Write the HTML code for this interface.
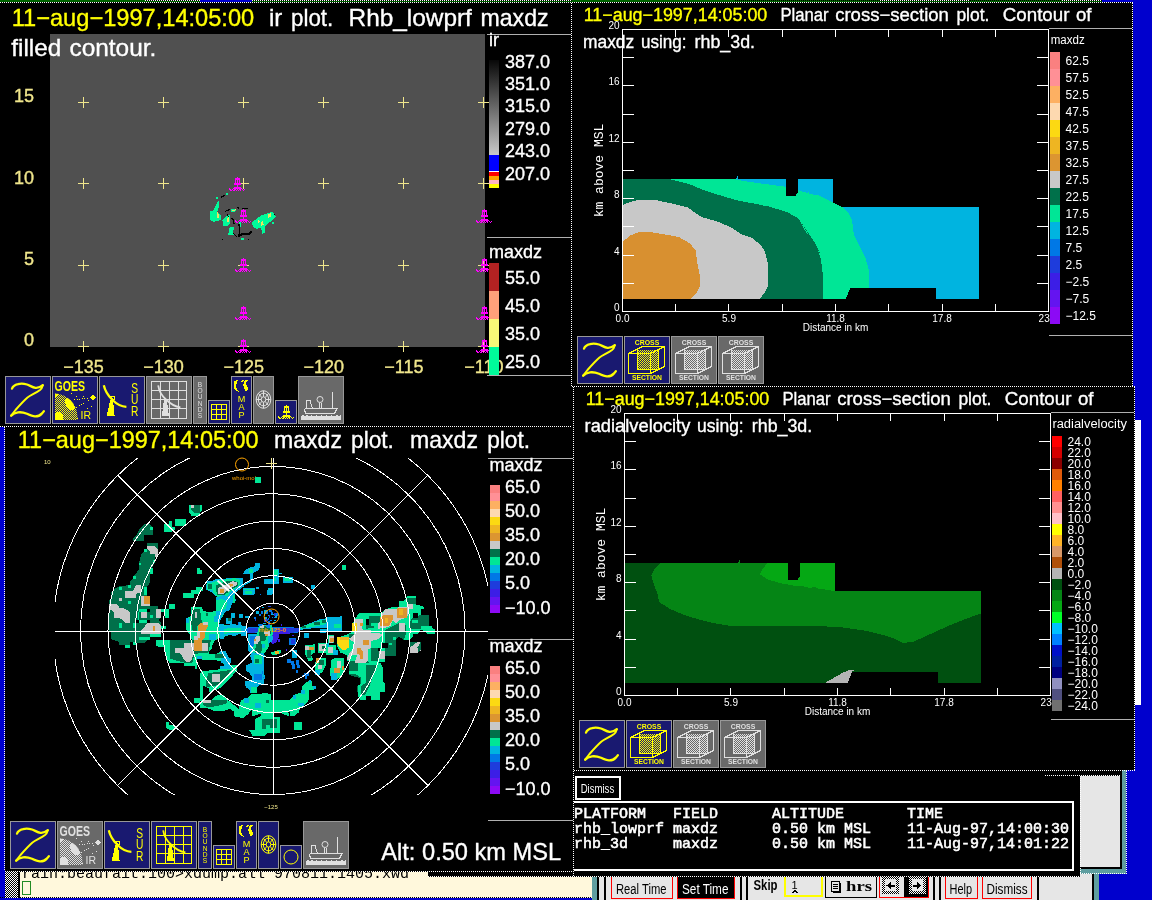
<!DOCTYPE html>
<html><head><meta charset="utf-8"><title>zebra display</title>
<style>
html,body{margin:0;padding:0;background:#000;}
body{width:1152px;height:900px;overflow:hidden;font-family:"Liberation Sans",sans-serif;}
svg{display:block;position:absolute;left:0;top:0;will-change:transform;}
svg text{white-space:pre;}
</style></head><body>
<svg width="1152" height="900" viewBox="0 0 1152 900" shape-rendering="crispEdges">
<defs>
<pattern id="dith_ffff00" width="2" height="2" patternUnits="userSpaceOnUse"><rect x="0" y="0" width="1" height="1" fill="#ffff00"/><rect x="1" y="1" width="1" height="1" fill="#ffff00"/></pattern><pattern id="dith_e0e0e0" width="2" height="2" patternUnits="userSpaceOnUse"><rect x="0" y="0" width="1" height="1" fill="#e0e0e0"/><rect x="1" y="1" width="1" height="1" fill="#e0e0e0"/></pattern><pattern id="dith_808080" width="2" height="2" patternUnits="userSpaceOnUse"><rect x="0" y="0" width="1" height="1" fill="#808080"/><rect x="1" y="1" width="1" height="1" fill="#808080"/></pattern><pattern id="dith_ffffff" width="2" height="2" patternUnits="userSpaceOnUse"><rect x="0" y="0" width="1" height="1" fill="#ffffff"/><rect x="1" y="1" width="1" height="1" fill="#ffffff"/></pattern><symbol id="buoy" width="16" height="14" viewBox="0 0 16 14" overflow="visible"><path d="M8 0h1v1h-1zM6 1h5v1h-5zM6 2h5v1h-5zM6 3h1v1h-1zM8 3h1v1h-1zM10 3h1v1h-1zM6 4h1v1h-1zM8 4h1v1h-1zM10 4h1v1h-1zM6 5h1v1h-1zM8 5h1v1h-1zM10 5h1v1h-1zM5 6h7v1h-7zM5 7h7v1h-7zM8 8h1v1h-1zM8 9h1v1h-1zM5 10h7v1h-7zM0 11h1v1h-1zM4 11h9v1h-9zM0 12h2v1h-2zM3 12h1v1h-1zM5 12h2v1h-2zM8 12h1v1h-1zM10 12h2v1h-2zM13 12h1v1h-1zM15 12h1v1h-1zM1 13h2v1h-2zM4 13h2v1h-2zM7 13h1v1h-1zM9 13h1v1h-1zM11 13h1v1h-1zM14 13h1v1h-1z" fill="currentColor"/></symbol><linearGradient id="irg" x1="0" y1="0" x2="0" y2="1"><stop offset="0" stop-color="#080808"/><stop offset="1" stop-color="#c8c8c8"/></linearGradient>
</defs>
<rect x="0" y="0" width="1152" height="900" fill="#000" />
<rect x="1133" y="0" width="19" height="900" fill="#0000cd" />
<rect x="1126" y="770" width="26" height="130" fill="#0000cd" />
<rect x="1099" y="874" width="53" height="26" fill="#0000cd" />
<rect x="0" y="427" width="5" height="473" fill="#0000cd" />
<rect x="0" y="897" width="600" height="3" fill="#0000cd" />
<rect x="0" y="0" width="1102" height="2" fill="#006400" />
<rect x="145" y="0" width="55" height="1" fill="#000" />
<line x1="145" y1="0.5" x2="200" y2="0.5" stroke="#fff" stroke-width="1" stroke-dasharray="1 1"/>
<rect x="252" y="0" width="320" height="1" fill="#000" />
<line x1="252" y1="0.5" x2="572" y2="0.5" stroke="#fff" stroke-width="1" stroke-dasharray="1 1"/>
<rect x="880" y="0" width="90" height="1" fill="#000" />
<line x1="880" y1="0.5" x2="970" y2="0.5" stroke="#fff" stroke-width="1" stroke-dasharray="1 1"/>
<rect x="1062" y="0" width="40" height="1" fill="#000" />
<line x1="1062" y1="0.5" x2="1102" y2="0.5" stroke="#fff" stroke-width="1" stroke-dasharray="1 1"/>
<line x1="735" y1="0.5" x2="880" y2="0.5" stroke="#000" stroke-width="1" stroke-dasharray="1 1"/>
<line x1="970" y1="0.5" x2="1062" y2="0.5" stroke="#000" stroke-width="1" stroke-dasharray="1 1"/>
<rect x="200" y="0" width="52" height="2" fill="#0000cd" />
<rect x="1102" y="0" width="50" height="2" fill="#0000cd" />
<line x1="0" y1="2.5" x2="1102" y2="2.5" stroke="#fff" stroke-width="1" stroke-dasharray="1 1"/>
<rect x="50" y="34" width="435" height="313" fill="#505050" />
<text x="11.7" y="26.3" font-size="24" fill="#ffff00" font-family='"Liberation Sans", sans-serif' text-anchor="start"  textLength="242.47" lengthAdjust="spacingAndGlyphs" stroke="#ffff00" stroke-width="0.35">11−aug−1997,14:05:00</text>
<text x="268.9" y="26.3" font-size="24" fill="#fff" font-family='"Liberation Sans", sans-serif' text-anchor="start"  stroke="#fff" stroke-width="0.35">ir</text>
<text x="291.1" y="26.3" font-size="24" fill="#fff" font-family='"Liberation Sans", sans-serif' text-anchor="start"  textLength="42.19" lengthAdjust="spacingAndGlyphs" stroke="#fff" stroke-width="0.35">plot.</text>
<text x="348.6" y="26.3" font-size="24" fill="#fff" font-family='"Liberation Sans", sans-serif' text-anchor="start"  textLength="123.29" lengthAdjust="spacingAndGlyphs" stroke="#fff" stroke-width="0.35">Rhb_lowprf</text>
<text x="480.5" y="26.3" font-size="24" fill="#fff" font-family='"Liberation Sans", sans-serif' text-anchor="start"  textLength="68.04" lengthAdjust="spacingAndGlyphs" stroke="#fff" stroke-width="0.35">maxdz</text>
<text x="11.3" y="56.3" font-size="24" fill="#fff" font-family='"Liberation Sans", sans-serif' text-anchor="start"  textLength="49.98" lengthAdjust="spacingAndGlyphs" stroke="#fff" stroke-width="0.35">filled</text>
<text x="69.5" y="56.3" font-size="24" fill="#fff" font-family='"Liberation Sans", sans-serif' text-anchor="start"  textLength="86.82" lengthAdjust="spacingAndGlyphs" stroke="#fff" stroke-width="0.35">contour.</text>
<text x="34" y="102.3" font-size="18" fill="#f0e68c" font-family='"Liberation Sans", sans-serif' text-anchor="end"  stroke="#f0e68c" stroke-width="0.35">15</text>
<text x="34" y="183.6" font-size="18" fill="#f0e68c" font-family='"Liberation Sans", sans-serif' text-anchor="end"  stroke="#f0e68c" stroke-width="0.35">10</text>
<text x="34" y="264.9" font-size="18" fill="#f0e68c" font-family='"Liberation Sans", sans-serif' text-anchor="end"  stroke="#f0e68c" stroke-width="0.35">5</text>
<text x="34" y="346.2" font-size="18" fill="#f0e68c" font-family='"Liberation Sans", sans-serif' text-anchor="end"  stroke="#f0e68c" stroke-width="0.35">0</text>
<text x="83.5" y="372.9" font-size="18" fill="#f0e68c" font-family='"Liberation Sans", sans-serif' text-anchor="middle"  stroke="#f0e68c" stroke-width="0.35">−135</text>
<text x="163.58" y="372.9" font-size="18" fill="#f0e68c" font-family='"Liberation Sans", sans-serif' text-anchor="middle"  stroke="#f0e68c" stroke-width="0.35">−130</text>
<text x="243.66" y="372.9" font-size="18" fill="#f0e68c" font-family='"Liberation Sans", sans-serif' text-anchor="middle"  stroke="#f0e68c" stroke-width="0.35">−125</text>
<text x="323.74" y="372.9" font-size="18" fill="#f0e68c" font-family='"Liberation Sans", sans-serif' text-anchor="middle"  stroke="#f0e68c" stroke-width="0.35">−120</text>
<text x="403.82" y="372.9" font-size="18" fill="#f0e68c" font-family='"Liberation Sans", sans-serif' text-anchor="middle"  stroke="#f0e68c" stroke-width="0.35">−115</text>
<text x="483.9" y="372.9" font-size="18" fill="#f0e68c" font-family='"Liberation Sans", sans-serif' text-anchor="middle"  stroke="#f0e68c" stroke-width="0.35">−110</text>
<line x1="78" y1="102.5" x2="89" y2="102.5" stroke="#f0e68c" stroke-width="1" />
<line x1="83.5" y1="97" x2="83.5" y2="108" stroke="#f0e68c" stroke-width="1" />
<line x1="78" y1="183.5" x2="89" y2="183.5" stroke="#f0e68c" stroke-width="1" />
<line x1="83.5" y1="178" x2="83.5" y2="189" stroke="#f0e68c" stroke-width="1" />
<line x1="78" y1="265.5" x2="89" y2="265.5" stroke="#f0e68c" stroke-width="1" />
<line x1="83.5" y1="260" x2="83.5" y2="271" stroke="#f0e68c" stroke-width="1" />
<line x1="78" y1="346.5" x2="89" y2="346.5" stroke="#f0e68c" stroke-width="1" />
<line x1="83.5" y1="341" x2="83.5" y2="352" stroke="#f0e68c" stroke-width="1" />
<line x1="158" y1="102.5" x2="169" y2="102.5" stroke="#f0e68c" stroke-width="1" />
<line x1="163.5" y1="97" x2="163.5" y2="108" stroke="#f0e68c" stroke-width="1" />
<line x1="158" y1="183.5" x2="169" y2="183.5" stroke="#f0e68c" stroke-width="1" />
<line x1="163.5" y1="178" x2="163.5" y2="189" stroke="#f0e68c" stroke-width="1" />
<line x1="158" y1="265.5" x2="169" y2="265.5" stroke="#f0e68c" stroke-width="1" />
<line x1="163.5" y1="260" x2="163.5" y2="271" stroke="#f0e68c" stroke-width="1" />
<line x1="158" y1="346.5" x2="169" y2="346.5" stroke="#f0e68c" stroke-width="1" />
<line x1="163.5" y1="341" x2="163.5" y2="352" stroke="#f0e68c" stroke-width="1" />
<line x1="238" y1="102.5" x2="249" y2="102.5" stroke="#f0e68c" stroke-width="1" />
<line x1="243.5" y1="97" x2="243.5" y2="108" stroke="#f0e68c" stroke-width="1" />
<line x1="238" y1="183.5" x2="249" y2="183.5" stroke="#f0e68c" stroke-width="1" />
<line x1="243.5" y1="178" x2="243.5" y2="189" stroke="#f0e68c" stroke-width="1" />
<line x1="238" y1="265.5" x2="249" y2="265.5" stroke="#f0e68c" stroke-width="1" />
<line x1="243.5" y1="260" x2="243.5" y2="271" stroke="#f0e68c" stroke-width="1" />
<line x1="238" y1="346.5" x2="249" y2="346.5" stroke="#f0e68c" stroke-width="1" />
<line x1="243.5" y1="341" x2="243.5" y2="352" stroke="#f0e68c" stroke-width="1" />
<line x1="318" y1="102.5" x2="329" y2="102.5" stroke="#f0e68c" stroke-width="1" />
<line x1="323.5" y1="97" x2="323.5" y2="108" stroke="#f0e68c" stroke-width="1" />
<line x1="318" y1="183.5" x2="329" y2="183.5" stroke="#f0e68c" stroke-width="1" />
<line x1="323.5" y1="178" x2="323.5" y2="189" stroke="#f0e68c" stroke-width="1" />
<line x1="318" y1="265.5" x2="329" y2="265.5" stroke="#f0e68c" stroke-width="1" />
<line x1="323.5" y1="260" x2="323.5" y2="271" stroke="#f0e68c" stroke-width="1" />
<line x1="318" y1="346.5" x2="329" y2="346.5" stroke="#f0e68c" stroke-width="1" />
<line x1="323.5" y1="341" x2="323.5" y2="352" stroke="#f0e68c" stroke-width="1" />
<line x1="398" y1="102.5" x2="409" y2="102.5" stroke="#f0e68c" stroke-width="1" />
<line x1="403.5" y1="97" x2="403.5" y2="108" stroke="#f0e68c" stroke-width="1" />
<line x1="398" y1="183.5" x2="409" y2="183.5" stroke="#f0e68c" stroke-width="1" />
<line x1="403.5" y1="178" x2="403.5" y2="189" stroke="#f0e68c" stroke-width="1" />
<line x1="398" y1="265.5" x2="409" y2="265.5" stroke="#f0e68c" stroke-width="1" />
<line x1="403.5" y1="260" x2="403.5" y2="271" stroke="#f0e68c" stroke-width="1" />
<line x1="398" y1="346.5" x2="409" y2="346.5" stroke="#f0e68c" stroke-width="1" />
<line x1="403.5" y1="341" x2="403.5" y2="352" stroke="#f0e68c" stroke-width="1" />
<line x1="478" y1="102.5" x2="489" y2="102.5" stroke="#f0e68c" stroke-width="1" />
<line x1="483.5" y1="97" x2="483.5" y2="108" stroke="#f0e68c" stroke-width="1" />
<line x1="478" y1="183.5" x2="489" y2="183.5" stroke="#f0e68c" stroke-width="1" />
<line x1="483.5" y1="178" x2="483.5" y2="189" stroke="#f0e68c" stroke-width="1" />
<line x1="478" y1="265.5" x2="489" y2="265.5" stroke="#f0e68c" stroke-width="1" />
<line x1="483.5" y1="260" x2="483.5" y2="271" stroke="#f0e68c" stroke-width="1" />
<line x1="478" y1="346.5" x2="489" y2="346.5" stroke="#f0e68c" stroke-width="1" />
<line x1="483.5" y1="341" x2="483.5" y2="352" stroke="#f0e68c" stroke-width="1" />
<use href="#buoy" x="229" y="177" color="#ff00ff"/>
<use href="#buoy" x="235" y="209" color="#ff00ff"/>
<use href="#buoy" x="235" y="258" color="#ff00ff"/>
<use href="#buoy" x="235" y="306" color="#ff00ff"/>
<use href="#buoy" x="235" y="339" color="#ff00ff"/>
<use href="#buoy" x="476" y="209" color="#ff00ff"/>
<use href="#buoy" x="476" y="258" color="#ff00ff"/>
<use href="#buoy" x="476" y="306" color="#ff00ff"/>
<use href="#buoy" x="476" y="339" color="#ff00ff"/>
<line x1="487" y1="34.5" x2="571" y2="34.5" stroke="#b0b0b0" stroke-width="1" />
<text x="489" y="46.4" font-size="18" fill="#fff" font-family='"Liberation Sans", sans-serif' text-anchor="start"  stroke="#fff" stroke-width="0.35">ir</text>
<rect x="489" y="60" width="10" height="94.5" fill="url(#irg)" />
<rect x="489" y="154.5" width="10" height="16.5" fill="#0000ff" />
<rect x="489" y="171" width="10" height="1" fill="#fff" />
<rect x="489" y="172" width="10" height="4" fill="#ff0000" />
<rect x="489" y="176" width="10" height="4" fill="#ffa500" />
<rect x="489" y="180" width="10" height="4" fill="#ffb6c1" />
<rect x="489" y="184" width="10" height="4" fill="#ffff00" />
<text x="505" y="67.6" font-size="18" fill="#fff" font-family='"Liberation Sans", sans-serif' text-anchor="start"  stroke="#fff" stroke-width="0.35">387.0</text>
<text x="505" y="90" font-size="18" fill="#fff" font-family='"Liberation Sans", sans-serif' text-anchor="start"  stroke="#fff" stroke-width="0.35">351.0</text>
<text x="505" y="112.4" font-size="18" fill="#fff" font-family='"Liberation Sans", sans-serif' text-anchor="start"  stroke="#fff" stroke-width="0.35">315.0</text>
<text x="505" y="134.8" font-size="18" fill="#fff" font-family='"Liberation Sans", sans-serif' text-anchor="start"  stroke="#fff" stroke-width="0.35">279.0</text>
<text x="505" y="157.2" font-size="18" fill="#fff" font-family='"Liberation Sans", sans-serif' text-anchor="start"  stroke="#fff" stroke-width="0.35">243.0</text>
<text x="505" y="179.6" font-size="18" fill="#fff" font-family='"Liberation Sans", sans-serif' text-anchor="start"  stroke="#fff" stroke-width="0.35">207.0</text>
<line x1="487" y1="237.5" x2="571" y2="237.5" stroke="#b0b0b0" stroke-width="1" />
<text x="489" y="257.5" font-size="18" fill="#fff" font-family='"Liberation Sans", sans-serif' text-anchor="start"  stroke="#fff" stroke-width="0.35">maxdz</text>
<rect x="489" y="263" width="10" height="28" fill="#b22222" />
<rect x="489" y="291" width="10" height="28" fill="#ffa07a" />
<rect x="489" y="319" width="10" height="28" fill="#f8f878" />
<rect x="489" y="347" width="10" height="28" fill="#00fa9a" />
<text x="505" y="284" font-size="18" fill="#fff" font-family='"Liberation Sans", sans-serif' text-anchor="start"  stroke="#fff" stroke-width="0.35">55.0</text>
<text x="505" y="312.1" font-size="18" fill="#fff" font-family='"Liberation Sans", sans-serif' text-anchor="start"  stroke="#fff" stroke-width="0.35">45.0</text>
<text x="505" y="340.2" font-size="18" fill="#fff" font-family='"Liberation Sans", sans-serif' text-anchor="start"  stroke="#fff" stroke-width="0.35">35.0</text>
<text x="505" y="368.3" font-size="18" fill="#fff" font-family='"Liberation Sans", sans-serif' text-anchor="start"  stroke="#fff" stroke-width="0.35">25.0</text>
<line x1="487" y1="375.5" x2="571" y2="375.5" stroke="#b0b0b0" stroke-width="1" />
<polygon points="217.778,201.111 219.111,201.111 219.111,206.667 217.222,212.222 220.556,215.556 221.111,220 213.889,221.667 210,220 210,211.667 213.889,210 216.111,204.444" fill="#00fa9a" />
<polygon points="215.556,197.222 217.778,197.222 217.778,199.444 215.556,199.444" fill="#00fa9a" />
<polygon points="226.111,192.778 228.333,192.778 228.333,195 226.111,195" fill="#00fa9a" />
<polygon points="222.222,220 227.778,215 230,215.556 230.556,222.222 227.778,226.111 223.333,225.556" fill="#00fa9a" />
<polygon points="228.889,227.778 234.444,226.667 232.778,232.222 234.444,235.556 228.333,235" fill="#00fa9a" />
<polygon points="230.556,208.889 236.667,208.889 234.444,212.222 231.111,211.667" fill="#00fa9a" />
<polygon points="252.222,222.222 261.111,215.556 272.778,211.667 276.111,216.667 267.778,223.889 264.444,226.667 265.556,232.222 262.222,233.889 261.111,227.778 256.667,228.889 252.778,226.667" fill="#00fa9a" />
<polygon points="240.556,237.778 244.444,237.778 243.889,240.556 241.111,240" fill="#00fa9a" />
<polygon points="238.889,222.222 241.111,222.222 240.556,226.667 238.889,226.667" fill="#00fa9a" />
<polygon points="272.222,221.667 273.889,221.667 273.889,223.889 272.222,223.889" fill="#00fa9a" />
<polygon points="267.778,214.444 270.556,213.333 271.111,216.667 268.333,217.778" fill="#f0e060" />
<polygon points="261.111,221.667 263.333,221.111 263.556,225 261.333,225.556" fill="#f0e060" />
<polygon points="257.778,220.556 259.444,220 259.667,222.222 258,222.778" fill="#f0e060" />
<polygon points="227.222,217.778 228.889,217.222 229.111,221.667 227.556,222.222" fill="#f0e060" />
<polygon points="216.667,212.222 218.333,212.222 218.889,217.778 217.222,217.778" fill="#f0e060" />
<polygon points="232.222,209.778 235.556,209.444 235,211.111 232.444,211.333" fill="#f0e060" />
<polyline points="238.889,223.889 239.556,231.111 238.667,236.667" fill="none" stroke="#000" stroke-width="1.2"/>
<polyline points="237.778,236.667 242.222,234.222 249.444,234.222 251.778,231.111" fill="none" stroke="#000" stroke-width="2"/>
<polyline points="225,211.333 230,209.556" fill="none" stroke="#000" stroke-width="1.2"/>
<polyline points="220.556,197.556 224.667,195.556" fill="none" stroke="#000" stroke-width="1.2"/>
<polyline points="231.667,217.778 233.556,220.556 234,223.889" fill="none" stroke="#000" stroke-width="1.2"/>
<polyline points="232.778,232.778 236.667,236.667" fill="none" stroke="#000" stroke-width="1.2"/>
<polyline points="237.778,206.667 238.444,209.444" fill="none" stroke="#000" stroke-width="1.2"/>
<polyline points="242.222,208.556 247.778,208.556" fill="none" stroke="#000" stroke-width="1.2"/>
<polyline points="227.222,214.444 228.333,216.667" fill="none" stroke="#000" stroke-width="1.2"/>
<polygon points="221.778,239 222.667,239 222.667,239.889 221.778,239.889" fill="#000" />
<polygon points="247.889,239 248.778,239 248.778,239.889 247.889,239.889" fill="#000" />
<polygon points="274,214 274.889,214 274.889,214.889 274,214.889" fill="#000" />
<line x1="0" y1="426.5" x2="572" y2="426.5" stroke="#fff" stroke-width="1" stroke-dasharray="1 1"/>
<g transform="translate(5,376)"><rect x="0" y="0" width="46" height="48" fill="#989898"/><rect x="1" y="1" width="44" height="46" fill="#191970"/><g fill="none" stroke="#ffff00" stroke-linecap="round" stroke-linejoin="round" shape-rendering="geometricPrecision"><path d="M7 12.6 C7.8 10.5 10.5 8.8 13 8.2 C15 7.6 18 7.4 22 8.5 C25 9.6 27.5 11.4 30.5 11.8 C33.5 12 36 10.8 37.8 9.2" stroke-width="2.3"/><path d="M37.8 9.2 C37.2 11.5 36.5 12.8 35 14 C31 17 26 19 22.5 21.5 C18.5 25 14 30 10.5 34 L6.2 39.6" stroke-width="2"/><path d="M6.2 39.6 C8 37.8 10.5 36.8 13 36.4 C15 36.1 18.5 36.4 22 37.8 C25 39.2 27.5 40.3 30 40.4 C33 40.5 35.5 39 36.8 37.6 C37.8 36.6 38.4 36 38.9 35.2" stroke-width="2.3"/></g></g>
<g transform="translate(52,376)"><rect x="0" y="0" width="46" height="48" fill="#989898"/><rect x="1" y="1" width="44" height="46" fill="#191970"/><text x="2.6" y="15" font-size="15.5" font-weight="bold" font-family='"Liberation Sans", sans-serif' fill="#ffff00" textLength="30.5" lengthAdjust="spacingAndGlyphs">GOES</text><clipPath id="ec52_376"><circle cx="2" cy="41" r="23.5"/></clipPath><g clip-path="url(#ec52_376)"><rect x="3" y="17" width="23" height="27" fill="url(#dith_ffff00)"/><polygon points="13,25 16,21 19,21 21,25 23,31 22,34 18,34 14,31" fill="#ffff00"/><polygon points="3,44 3,38 5,36 9,36 11,39 11.5,44" fill="#ffff00"/><polygon points="3,17 8,17 6,20 3,21" fill="#ffff00"/></g><polygon points="40.5,18.5 43.5,21.5 40.5,24.5 37.5,21.5" fill="#ffff00"/><line x1="22" y1="23.5" x2="38" y2="22.5" stroke="#ffff00" stroke-width="1" stroke-dasharray="1 1.6"/><line x1="24.5" y1="31.5" x2="38.5" y2="23.5" stroke="#ffff00" stroke-width="1" stroke-dasharray="1 1.6"/><rect x="19" y="17" width="1" height="1" fill="#ffff00"/><rect x="24" y="20" width="1" height="1" fill="#ffff00"/><rect x="31" y="20" width="1" height="1" fill="#ffff00"/><rect x="39" y="30" width="1" height="1" fill="#ffff00"/><rect x="35" y="32" width="1" height="1" fill="#ffff00"/><rect x="25" y="42" width="1" height="1" fill="#ffff00"/><text x="28.5" y="42.6" font-size="10.2" font-family='"Liberation Sans", sans-serif' fill="#ffff00" textLength="10.5" lengthAdjust="spacingAndGlyphs">IR</text></g>
<g transform="translate(99,376)"><rect x="0" y="0" width="46" height="48" fill="#989898"/><rect x="1" y="1" width="44" height="46" fill="#191970"/><path d="M4.8 9.2 C6 15 9.5 20 13.5 24 C18 28.5 23 30.6 27.4 30.8" fill="none" stroke="#ffff00" stroke-width="2.3" shape-rendering="geometricPrecision"/><polygon points="11.3,20.8 15.5,20.8 15,24.2" fill="none" stroke="#ffff00" stroke-width="1"/><polygon points="11.2,23.5 13.4,23.5 14.7,30 15,35.2 15.6,39.6 8.2,39.6 8.6,35.2 9.9,30" fill="#ffff00"/><text transform="translate(35.6,16.6) scale(0.72,1)" font-size="14.2" font-weight="normal" font-family='"Liberation Sans", sans-serif' fill="#ffff00" text-anchor="middle">S</text><text transform="translate(35.6,28) scale(0.72,1)" font-size="14.2" font-weight="normal" font-family='"Liberation Sans", sans-serif' fill="#ffff00" text-anchor="middle">U</text><text transform="translate(35.6,39.6) scale(0.72,1)" font-size="14.2" font-weight="normal" font-family='"Liberation Sans", sans-serif' fill="#ffff00" text-anchor="middle">R</text></g>
<g transform="translate(146,376)"><rect x="0" y="0" width="46" height="48" fill="#989898"/><rect x="1" y="1" width="44" height="46" fill="#696969"/><line x1="5.5" y1="5" x2="5.5" y2="43" stroke="#e0e0e0" stroke-width="1"/><line x1="14.5" y1="5" x2="14.5" y2="43" stroke="#e0e0e0" stroke-width="1"/><line x1="23.5" y1="5" x2="23.5" y2="43" stroke="#e0e0e0" stroke-width="1"/><line x1="32.5" y1="5" x2="32.5" y2="43" stroke="#e0e0e0" stroke-width="1"/><line x1="40.5" y1="5" x2="40.5" y2="43" stroke="#e0e0e0" stroke-width="1"/><line x1="5" y1="5.5" x2="41" y2="5.5" stroke="#e0e0e0" stroke-width="1"/><line x1="5" y1="14.5" x2="41" y2="14.5" stroke="#e0e0e0" stroke-width="1"/><line x1="5" y1="23.5" x2="41" y2="23.5" stroke="#e0e0e0" stroke-width="1"/><line x1="5" y1="32.5" x2="41" y2="32.5" stroke="#e0e0e0" stroke-width="1"/><line x1="5" y1="42.5" x2="41" y2="42.5" stroke="#e0e0e0" stroke-width="1"/><path d="M12.2 9.4 C13 15 16 20 20 23.5 C24 27.5 29 30.6 34.4 31.4" fill="none" stroke="#e0e0e0" stroke-width="1.8" shape-rendering="geometricPrecision"/><polygon points="18.3,22.7 20.4,22.7 21.8,30.4 22.8,40 16,40 17,30.4" fill="#e0e0e0"/></g>
<g transform="translate(193,376)"><rect x="0" y="0" width="14" height="48" fill="#989898"/><rect x="1" y="1" width="12" height="46" fill="#696969"/><text transform="translate(7,11) scale(1,1)" font-size="6.6" font-weight="normal" font-family='"Liberation Sans", sans-serif' fill="#e0e0e0" text-anchor="middle">B</text><text transform="translate(7,17.2) scale(1,1)" font-size="6.6" font-weight="normal" font-family='"Liberation Sans", sans-serif' fill="#e0e0e0" text-anchor="middle">O</text><text transform="translate(7,23.4) scale(1,1)" font-size="6.6" font-weight="normal" font-family='"Liberation Sans", sans-serif' fill="#e0e0e0" text-anchor="middle">U</text><text transform="translate(7,29.6) scale(1,1)" font-size="6.6" font-weight="normal" font-family='"Liberation Sans", sans-serif' fill="#e0e0e0" text-anchor="middle">N</text><text transform="translate(7,35.8) scale(1,1)" font-size="6.6" font-weight="normal" font-family='"Liberation Sans", sans-serif' fill="#e0e0e0" text-anchor="middle">D</text><text transform="translate(7,42) scale(1,1)" font-size="6.6" font-weight="normal" font-family='"Liberation Sans", sans-serif' fill="#e0e0e0" text-anchor="middle">S</text></g>
<g transform="translate(208,400)"><rect x="0" y="0" width="22" height="24" fill="#989898"/><rect x="1" y="1" width="20" height="22" fill="#191970"/><line x1="3.5" y1="4" x2="3.5" y2="20" stroke="#ffff00" stroke-width="1"/><line x1="8.5" y1="4" x2="8.5" y2="20" stroke="#ffff00" stroke-width="1"/><line x1="13.5" y1="4" x2="13.5" y2="20" stroke="#ffff00" stroke-width="1"/><line x1="18.5" y1="4" x2="18.5" y2="20" stroke="#ffff00" stroke-width="1"/><line x1="3" y1="4.5" x2="19" y2="4.5" stroke="#ffff00" stroke-width="1"/><line x1="3" y1="9.5" x2="19" y2="9.5" stroke="#ffff00" stroke-width="1"/><line x1="3" y1="14.5" x2="19" y2="14.5" stroke="#ffff00" stroke-width="1"/><line x1="3" y1="19.5" x2="19" y2="19.5" stroke="#ffff00" stroke-width="1"/></g>
<g transform="translate(231,376)"><rect x="0" y="0" width="21" height="48" fill="#989898"/><rect x="1" y="1" width="19" height="46" fill="#191970"/><polygon points="3,5 7,4 6,7 4.5,10 6,13 8,16 5,15 3,13" fill="#ffff00"/><polygon points="9,5 13,4 11,7" fill="#ffff00"/><polygon points="14,4 18,3.5 15,7 16,10 17.5,13 15,16 13.5,13 12,9" fill="#ffff00"/><text transform="translate(10.5,25.5) scale(0.95,1)" font-size="9.6" font-weight="normal" font-family='"Liberation Sans", sans-serif' fill="#ffff00" text-anchor="middle">M</text><text transform="translate(10.5,33.8) scale(0.95,1)" font-size="9.6" font-weight="normal" font-family='"Liberation Sans", sans-serif' fill="#ffff00" text-anchor="middle">A</text><text transform="translate(10.5,42) scale(0.95,1)" font-size="9.6" font-weight="normal" font-family='"Liberation Sans", sans-serif' fill="#ffff00" text-anchor="middle">P</text></g>
<g transform="translate(253,376)"><rect x="0" y="0" width="21" height="48" fill="#989898"/><rect x="1" y="1" width="19" height="46" fill="#696969"/><g fill="none" stroke="#e0e0e0" stroke-width="1" shape-rendering="geometricPrecision"><ellipse cx="10.5" cy="23.5" rx="7.3" ry="8.8"/><ellipse cx="10.5" cy="23.5" rx="5.2" ry="6.4"/><ellipse cx="10.5" cy="23.5" rx="2.3" ry="2.7"/><line x1="12.80" y1="23.50" x2="17.80" y2="23.50"/><line x1="12.13" y1="25.41" x2="15.66" y2="29.72"/><line x1="10.50" y1="26.20" x2="10.50" y2="32.30"/><line x1="8.87" y1="25.41" x2="5.34" y2="29.72"/><line x1="8.20" y1="23.50" x2="3.20" y2="23.50"/><line x1="8.87" y1="21.59" x2="5.34" y2="17.28"/><line x1="10.50" y1="20.80" x2="10.50" y2="14.70"/><line x1="12.13" y1="21.59" x2="15.66" y2="17.28"/></g></g>
<g transform="translate(275,400)"><rect x="0" y="0" width="22" height="24" fill="#989898"/><rect x="1" y="1" width="20" height="22" fill="#191970"/><path d="M11 5h1v1h-1zM9 6h5v1h-5zM9 7h5v1h-5zM9 8h1v1h-1zM11 8h1v1h-1zM13 8h1v1h-1zM9 9h1v1h-1zM11 9h1v1h-1zM13 9h1v1h-1zM9 10h1v1h-1zM11 10h1v1h-1zM13 10h1v1h-1zM8 11h7v1h-7zM8 12h7v1h-7zM11 13h1v1h-1zM11 14h1v1h-1zM8 15h7v1h-7zM3 16h1v1h-1zM7 16h9v1h-9zM3 17h2v1h-2zM6 17h1v1h-1zM8 17h2v1h-2zM11 17h1v1h-1zM13 17h2v1h-2zM16 17h1v1h-1zM18 17h1v1h-1zM4 18h2v1h-2zM7 18h2v1h-2zM10 18h1v1h-1zM12 18h1v1h-1zM14 18h1v1h-1zM17 18h1v1h-1z" fill="#ffff00"/></g>
<g transform="translate(298,376)"><rect x="0" y="0" width="46" height="48" fill="#989898"/><rect x="1" y="1" width="44" height="46" fill="#696969"/><g fill="none" stroke="#e0e0e0" stroke-width="1"><polyline points="6.5,32.5 39,32.5 36.5,37.5 8,37.5 6.5,34.5 6.5,32.5"/><polyline points="8.5,32 8.5,24.5 12,24.5 14.2,32"/><circle cx="22" cy="23.5" r="3" shape-rendering="geometricPrecision"/><line x1="21.5" y1="26.5" x2="21.5" y2="32"/><line x1="23.5" y1="26.5" x2="23.5" y2="32"/><line x1="34.5" y1="16" x2="34.5" y2="32"/></g><path d="M3 44 V40 L5 38.5 L7 40.5 L9 39 L11 40.5 L13.5 39 L16 40.5 L18.5 39 L21 40.5 L23.5 39 L26 40.5 L28.5 39 L31 40.5 L33.5 39 L36 40.5 L38.5 39 L41 40 L43 38 V44 Z" fill="#e0e0e0"/></g>
<g transform="translate(0,0)">
<rect x="572" y="2" width="561" height="384" fill="#000" />
<text x="583.7" y="21" font-size="18" fill="#ffff00" font-family='"Liberation Sans", sans-serif' text-anchor="start"  textLength="183.59" lengthAdjust="spacingAndGlyphs" stroke="#ffff00" stroke-width="0.35">11−aug−1997,14:05:00</text>
<text x="780.5" y="21" font-size="18" fill="#fff" font-family='"Liberation Sans", sans-serif' text-anchor="start"  textLength="48.13" lengthAdjust="spacingAndGlyphs" stroke="#fff" stroke-width="0.35">Planar</text>
<text x="835.2" y="21" font-size="18" fill="#fff" font-family='"Liberation Sans", sans-serif' text-anchor="start"  textLength="113.66" lengthAdjust="spacingAndGlyphs" stroke="#fff" stroke-width="0.35">cross−section</text>
<text x="956.4" y="21" font-size="18" fill="#fff" font-family='"Liberation Sans", sans-serif' text-anchor="start"  textLength="33.03" lengthAdjust="spacingAndGlyphs" stroke="#fff" stroke-width="0.35">plot.</text>
<text x="1002.8" y="21" font-size="18" fill="#fff" font-family='"Liberation Sans", sans-serif' text-anchor="start"  textLength="66.64" lengthAdjust="spacingAndGlyphs" stroke="#fff" stroke-width="0.35">Contour</text>
<text x="1075.9" y="21" font-size="18" fill="#fff" font-family='"Liberation Sans", sans-serif' text-anchor="start"  textLength="15.58" lengthAdjust="spacingAndGlyphs" stroke="#fff" stroke-width="0.35">of</text>
<text x="583" y="47.8" font-size="18" fill="#fff" font-family='"Liberation Sans", sans-serif' text-anchor="start"  textLength="51.22" lengthAdjust="spacingAndGlyphs" stroke="#fff" stroke-width="0.35">maxdz</text>
<text x="641" y="47.8" font-size="18" fill="#fff" font-family='"Liberation Sans", sans-serif' text-anchor="start"  textLength="45.54" lengthAdjust="spacingAndGlyphs" stroke="#fff" stroke-width="0.35">using:</text>
<text x="694.6" y="47.8" font-size="18" fill="#fff" font-family='"Liberation Sans", sans-serif' text-anchor="start"  textLength="60.45" lengthAdjust="spacingAndGlyphs" stroke="#fff" stroke-width="0.35">rhb_3d.</text>
<polygon points="623,179 736.2,179 737.7,175 738.2,179 785.8,179 785.8,195.9 795.5,195.9 798,192 798,179 833,179 833,206.7 979,206.7 979,298.7 936,298.7 936,288 850.3,288 846,298.7 623,298.7" fill="#00b4e0" />
<polygon points="734.583,178.889 741.528,180.625 758.889,183.229 776.25,185.486 785.799,186.701 785.8,195.9 795.5,195.9 798,192 797.951,190.174 809.236,193.646 820,195.903 800,190.174 810.417,192.778 822.569,197.118 832.986,202.326 841.667,206.667 848.611,213.611 852.083,220.556 853.819,234.444 859.028,244.861 865.104,257.014 868.576,269.167 869.097,286.528 869,288 850.3,288 846,298.7 623,298.7 623,179" fill="#00e696" />
<polygon points="668.611,178.889 689.444,184.097 701.597,189.306 717.222,194.514 734.583,199.722 751.944,203.194 769.306,206.667 786.667,211.875 798.819,218.819 805.764,229.236 816.181,244.861 820,253.542 800,220.556 805.208,230.972 812.153,239.653 817.361,248.333 820.833,258.75 822.569,272.639 823.09,286.528 822.569,298.681 623,298.7 623,179" fill="#00704a" />
<polygon points="623.125,204.931 630.417,201.806 637.361,200.243 656.458,200.243 672.083,203.542 687.708,207.535 701.597,217.083 717.222,221.424 731.111,227.5 741.528,234.444 751.944,237.917 760.625,244.861 764.965,251.806 767.569,262.222 767.569,286.528 764.965,292.604 759.757,298.681 623.125,298.681" fill="#c8c8c8" />
<polygon points="623.125,241.389 630.417,235.312 639.097,232.188 651.25,232.188 665.139,234.444 679.028,237.049 689.444,243.125 695.521,250.069 697.257,262.222 699.861,276.111 699.861,286.528 696.389,293.472 691.181,298.681 623.125,298.681" fill="#d89030" />
<rect x="622.5" y="29.5" width="426.0" height="282.0" fill="none" stroke="#fff" stroke-width="1"/>
<line x1="622.5" y1="57.5" x2="634" y2="57.5" stroke="#fff" stroke-width="1" />
<line x1="1037" y1="57.5" x2="1048.5" y2="57.5" stroke="#fff" stroke-width="1" />
<line x1="622.5" y1="85.5" x2="634" y2="85.5" stroke="#fff" stroke-width="1" />
<line x1="1037" y1="85.5" x2="1048.5" y2="85.5" stroke="#fff" stroke-width="1" />
<line x1="622.5" y1="114.5" x2="634" y2="114.5" stroke="#fff" stroke-width="1" />
<line x1="1037" y1="114.5" x2="1048.5" y2="114.5" stroke="#fff" stroke-width="1" />
<line x1="622.5" y1="142.5" x2="634" y2="142.5" stroke="#fff" stroke-width="1" />
<line x1="1037" y1="142.5" x2="1048.5" y2="142.5" stroke="#fff" stroke-width="1" />
<line x1="622.5" y1="170.5" x2="634" y2="170.5" stroke="#fff" stroke-width="1" />
<line x1="1037" y1="170.5" x2="1048.5" y2="170.5" stroke="#fff" stroke-width="1" />
<line x1="622.5" y1="198.5" x2="634" y2="198.5" stroke="#fff" stroke-width="1" />
<line x1="1037" y1="198.5" x2="1048.5" y2="198.5" stroke="#fff" stroke-width="1" />
<line x1="622.5" y1="226.5" x2="634" y2="226.5" stroke="#fff" stroke-width="1" />
<line x1="1037" y1="226.5" x2="1048.5" y2="226.5" stroke="#fff" stroke-width="1" />
<line x1="622.5" y1="255.5" x2="634" y2="255.5" stroke="#fff" stroke-width="1" />
<line x1="1037" y1="255.5" x2="1048.5" y2="255.5" stroke="#fff" stroke-width="1" />
<line x1="622.5" y1="283.5" x2="634" y2="283.5" stroke="#fff" stroke-width="1" />
<line x1="1037" y1="283.5" x2="1048.5" y2="283.5" stroke="#fff" stroke-width="1" />
<line x1="675.5" y1="29.5" x2="675.5" y2="37" stroke="#fff" stroke-width="1" />
<line x1="675.5" y1="304" x2="675.5" y2="311.5" stroke="#fff" stroke-width="1" />
<line x1="728.5" y1="29.5" x2="728.5" y2="37" stroke="#fff" stroke-width="1" />
<line x1="728.5" y1="304" x2="728.5" y2="311.5" stroke="#fff" stroke-width="1" />
<line x1="782.5" y1="29.5" x2="782.5" y2="37" stroke="#fff" stroke-width="1" />
<line x1="782.5" y1="304" x2="782.5" y2="311.5" stroke="#fff" stroke-width="1" />
<line x1="835.5" y1="29.5" x2="835.5" y2="37" stroke="#fff" stroke-width="1" />
<line x1="835.5" y1="304" x2="835.5" y2="311.5" stroke="#fff" stroke-width="1" />
<line x1="888.5" y1="29.5" x2="888.5" y2="37" stroke="#fff" stroke-width="1" />
<line x1="888.5" y1="304" x2="888.5" y2="311.5" stroke="#fff" stroke-width="1" />
<line x1="942.5" y1="29.5" x2="942.5" y2="37" stroke="#fff" stroke-width="1" />
<line x1="942.5" y1="304" x2="942.5" y2="311.5" stroke="#fff" stroke-width="1" />
<line x1="995.5" y1="29.5" x2="995.5" y2="37" stroke="#fff" stroke-width="1" />
<line x1="995.5" y1="304" x2="995.5" y2="311.5" stroke="#fff" stroke-width="1" />
<text x="619.5" y="29" font-size="10" fill="#fff" font-family='"Liberation Sans", sans-serif' text-anchor="end" >20</text>
<text x="619.5" y="85.4" font-size="10" fill="#fff" font-family='"Liberation Sans", sans-serif' text-anchor="end" >16</text>
<text x="619.5" y="141.8" font-size="10" fill="#fff" font-family='"Liberation Sans", sans-serif' text-anchor="end" >12</text>
<text x="619.5" y="198.2" font-size="10" fill="#fff" font-family='"Liberation Sans", sans-serif' text-anchor="end" >8</text>
<text x="619.5" y="254.6" font-size="10" fill="#fff" font-family='"Liberation Sans", sans-serif' text-anchor="end" >4</text>
<text x="619.5" y="311" font-size="10" fill="#fff" font-family='"Liberation Sans", sans-serif' text-anchor="end" >0</text>
<text x="622.5" y="322.2" font-size="10" fill="#fff" font-family='"Liberation Sans", sans-serif' text-anchor="middle" >0.0</text>
<text x="729" y="322.2" font-size="10" fill="#fff" font-family='"Liberation Sans", sans-serif' text-anchor="middle" >5.9</text>
<text x="835.5" y="322.2" font-size="10" fill="#fff" font-family='"Liberation Sans", sans-serif' text-anchor="middle" >11.8</text>
<text x="942" y="322.2" font-size="10" fill="#fff" font-family='"Liberation Sans", sans-serif' text-anchor="middle" >17.8</text>
<text x="1038.6" y="322.2" font-size="10" fill="#fff" font-family='"Liberation Sans", sans-serif' text-anchor="start" >23</text>
<text x="835.5" y="331" font-size="10" fill="#fff" font-family='"Liberation Sans", sans-serif' text-anchor="middle" >Distance in km</text>
<text transform="translate(603,170.5) rotate(-90)" font-size="13" font-family='"Liberation Mono", monospace' fill="#fff" text-anchor="middle">km above MSL</text>
<line x1="1049" y1="28.5" x2="1132" y2="28.5" stroke="#b0b0b0" stroke-width="1" />
<line x1="1049" y1="335.5" x2="1132" y2="335.5" stroke="#b0b0b0" stroke-width="1" />
<text x="1050.7" y="43.6" font-size="12" fill="#fff" font-family='"Liberation Sans", sans-serif' text-anchor="start"  textLength="33.97" lengthAdjust="spacingAndGlyphs">maxdz</text>
<rect x="1050" y="52" width="10" height="17" fill="#fa8080" />
<text x="1065.5" y="65" font-size="12" fill="#fff" font-family='"Liberation Sans", sans-serif' text-anchor="start" >62.5</text>
<rect x="1050" y="69" width="10" height="17" fill="#ff9096" />
<text x="1065.5" y="82" font-size="12" fill="#fff" font-family='"Liberation Sans", sans-serif' text-anchor="start" >57.5</text>
<rect x="1050" y="86" width="10" height="17" fill="#fdb062" />
<text x="1065.5" y="99" font-size="12" fill="#fff" font-family='"Liberation Sans", sans-serif' text-anchor="start" >52.5</text>
<rect x="1050" y="103" width="10" height="17" fill="#fdd9b0" />
<text x="1065.5" y="116" font-size="12" fill="#fff" font-family='"Liberation Sans", sans-serif' text-anchor="start" >47.5</text>
<rect x="1050" y="120" width="10" height="17" fill="#fcd912" />
<text x="1065.5" y="133" font-size="12" fill="#fff" font-family='"Liberation Sans", sans-serif' text-anchor="start" >42.5</text>
<rect x="1050" y="137" width="10" height="17" fill="#eeb522" />
<text x="1065.5" y="150" font-size="12" fill="#fff" font-family='"Liberation Sans", sans-serif' text-anchor="start" >37.5</text>
<rect x="1050" y="154" width="10" height="17" fill="#dc9531" />
<text x="1065.5" y="167" font-size="12" fill="#fff" font-family='"Liberation Sans", sans-serif' text-anchor="start" >32.5</text>
<rect x="1050" y="171" width="10" height="17" fill="#c8c8c8" />
<text x="1065.5" y="184" font-size="12" fill="#fff" font-family='"Liberation Sans", sans-serif' text-anchor="start" >27.5</text>
<rect x="1050" y="188" width="10" height="17" fill="#00704a" />
<text x="1065.5" y="201" font-size="12" fill="#fff" font-family='"Liberation Sans", sans-serif' text-anchor="start" >22.5</text>
<rect x="1050" y="205" width="10" height="17" fill="#00e696" />
<text x="1065.5" y="218" font-size="12" fill="#fff" font-family='"Liberation Sans", sans-serif' text-anchor="start" >17.5</text>
<rect x="1050" y="222" width="10" height="17" fill="#00b4e0" />
<text x="1065.5" y="235" font-size="12" fill="#fff" font-family='"Liberation Sans", sans-serif' text-anchor="start" >12.5</text>
<rect x="1050" y="239" width="10" height="17" fill="#0078e6" />
<text x="1065.5" y="252" font-size="12" fill="#fff" font-family='"Liberation Sans", sans-serif' text-anchor="start" >7.5</text>
<rect x="1050" y="256" width="10" height="17" fill="#1e3cdc" />
<text x="1065.5" y="269" font-size="12" fill="#fff" font-family='"Liberation Sans", sans-serif' text-anchor="start" >2.5</text>
<rect x="1050" y="273" width="10" height="17" fill="#3c1ee6" />
<text x="1065.5" y="286" font-size="12" fill="#fff" font-family='"Liberation Sans", sans-serif' text-anchor="start" >−2.5</text>
<rect x="1050" y="290" width="10" height="17" fill="#6414f0" />
<text x="1065.5" y="303" font-size="12" fill="#fff" font-family='"Liberation Sans", sans-serif' text-anchor="start" >−7.5</text>
<rect x="1050" y="307" width="10" height="17" fill="#8c0af5" />
<text x="1065.5" y="320" font-size="12" fill="#fff" font-family='"Liberation Sans", sans-serif' text-anchor="start" >−12.5</text>
<g transform="translate(577,336)"><rect x="0" y="0" width="46" height="48" fill="#989898"/><rect x="1" y="1" width="44" height="46" fill="#191970"/><g fill="none" stroke="#ffff00" stroke-linecap="round" stroke-linejoin="round" shape-rendering="geometricPrecision"><path d="M7 12.6 C7.8 10.5 10.5 8.8 13 8.2 C15 7.6 18 7.4 22 8.5 C25 9.6 27.5 11.4 30.5 11.8 C33.5 12 36 10.8 37.8 9.2" stroke-width="2.3"/><path d="M37.8 9.2 C37.2 11.5 36.5 12.8 35 14 C31 17 26 19 22.5 21.5 C18.5 25 14 30 10.5 34 L6.2 39.6" stroke-width="2"/><path d="M6.2 39.6 C8 37.8 10.5 36.8 13 36.4 C15 36.1 18.5 36.4 22 37.8 C25 39.2 27.5 40.3 30 40.4 C33 40.5 35.5 39 36.8 37.6 C37.8 36.6 38.4 36 38.9 35.2" stroke-width="2.3"/></g></g>
<g transform="translate(624,336)"><rect x="0" y="0" width="46" height="48" fill="#989898"/><rect x="1" y="1" width="44" height="46" fill="#191970"/><text x="23" y="9" font-size="6.8" font-weight="bold" font-family='"Liberation Sans", sans-serif' fill="#ffff00" text-anchor="middle" textLength="24.5" lengthAdjust="spacingAndGlyphs">CROSS</text><text x="23" y="44" font-size="6.8" font-weight="bold" font-family='"Liberation Sans", sans-serif' fill="#ffff00" text-anchor="middle" textLength="30" lengthAdjust="spacingAndGlyphs">SECTION</text><polygon points="13,13.5 34,13.5 34,33.5 13,33.5" fill="url(#dith_ffff00)"/><g fill="none" stroke="#ffff00" stroke-width="1"><rect x="4.5" y="17.5" width="22" height="20"/><polyline points="4.5,17.5 18.5,10.5 40.5,10.5 40.5,30.5 26.5,37.5"/><line x1="26.5" y1="17.5" x2="40.5" y2="10.5"/><line x1="13.5" y1="13" x2="13.5" y2="33.5"/><line x1="34.5" y1="13.5" x2="34.5" y2="33.5"/><line x1="13" y1="33.5" x2="34" y2="33.5"/></g></g>
<g transform="translate(671,336)"><rect x="0" y="0" width="46" height="48" fill="#989898"/><rect x="1" y="1" width="44" height="46" fill="#696969"/><text x="23" y="9" font-size="6.8" font-weight="bold" font-family='"Liberation Sans", sans-serif' fill="#e0e0e0" text-anchor="middle" textLength="24.5" lengthAdjust="spacingAndGlyphs">CROSS</text><text x="23" y="44" font-size="6.8" font-weight="bold" font-family='"Liberation Sans", sans-serif' fill="#e0e0e0" text-anchor="middle" textLength="30" lengthAdjust="spacingAndGlyphs">SECTION</text><polygon points="13,13.5 34,13.5 34,33.5 13,33.5" fill="url(#dith_e0e0e0)"/><g fill="none" stroke="#e0e0e0" stroke-width="1"><rect x="4.5" y="17.5" width="22" height="20"/><polyline points="4.5,17.5 18.5,10.5 40.5,10.5 40.5,30.5 26.5,37.5"/><line x1="26.5" y1="17.5" x2="40.5" y2="10.5"/><line x1="13.5" y1="13" x2="13.5" y2="33.5"/><line x1="34.5" y1="13.5" x2="34.5" y2="33.5"/><line x1="13" y1="33.5" x2="34" y2="33.5"/></g></g>
<g transform="translate(718,336)"><rect x="0" y="0" width="46" height="48" fill="#989898"/><rect x="1" y="1" width="44" height="46" fill="#696969"/><text x="23" y="9" font-size="6.8" font-weight="bold" font-family='"Liberation Sans", sans-serif' fill="#e0e0e0" text-anchor="middle" textLength="24.5" lengthAdjust="spacingAndGlyphs">CROSS</text><text x="23" y="44" font-size="6.8" font-weight="bold" font-family='"Liberation Sans", sans-serif' fill="#e0e0e0" text-anchor="middle" textLength="30" lengthAdjust="spacingAndGlyphs">SECTION</text><polygon points="13,13.5 34,13.5 34,33.5 13,33.5" fill="url(#dith_e0e0e0)"/><g fill="none" stroke="#e0e0e0" stroke-width="1"><rect x="4.5" y="17.5" width="22" height="20"/><polyline points="4.5,17.5 18.5,10.5 40.5,10.5 40.5,30.5 26.5,37.5"/><line x1="26.5" y1="17.5" x2="40.5" y2="10.5"/><line x1="13.5" y1="13" x2="13.5" y2="33.5"/><line x1="34.5" y1="13.5" x2="34.5" y2="33.5"/><line x1="13" y1="33.5" x2="34" y2="33.5"/></g></g>
<line x1="571.5" y1="3" x2="571.5" y2="386" stroke="#fff" stroke-width="1" stroke-dasharray="1 1"/>
<line x1="572" y1="2.5" x2="1133" y2="2.5" stroke="#fff" stroke-width="1" stroke-dasharray="1 1"/>
<line x1="1132.5" y1="3" x2="1132.5" y2="386" stroke="#fff" stroke-width="1" stroke-dasharray="1 1"/>
<line x1="572" y1="386.5" x2="1133" y2="386.5" stroke="#fff" stroke-width="1" stroke-dasharray="1 1"/>
</g>
<g transform="translate(2,384)">
<rect x="572" y="2" width="561" height="384" fill="#000" />
<text x="583.7" y="21" font-size="18" fill="#ffff00" font-family='"Liberation Sans", sans-serif' text-anchor="start"  textLength="183.59" lengthAdjust="spacingAndGlyphs" stroke="#ffff00" stroke-width="0.35">11−aug−1997,14:05:00</text>
<text x="780.5" y="21" font-size="18" fill="#fff" font-family='"Liberation Sans", sans-serif' text-anchor="start"  textLength="48.13" lengthAdjust="spacingAndGlyphs" stroke="#fff" stroke-width="0.35">Planar</text>
<text x="835.2" y="21" font-size="18" fill="#fff" font-family='"Liberation Sans", sans-serif' text-anchor="start"  textLength="113.66" lengthAdjust="spacingAndGlyphs" stroke="#fff" stroke-width="0.35">cross−section</text>
<text x="956.4" y="21" font-size="18" fill="#fff" font-family='"Liberation Sans", sans-serif' text-anchor="start"  textLength="33.03" lengthAdjust="spacingAndGlyphs" stroke="#fff" stroke-width="0.35">plot.</text>
<text x="1002.8" y="21" font-size="18" fill="#fff" font-family='"Liberation Sans", sans-serif' text-anchor="start"  textLength="66.64" lengthAdjust="spacingAndGlyphs" stroke="#fff" stroke-width="0.35">Contour</text>
<text x="1075.9" y="21" font-size="18" fill="#fff" font-family='"Liberation Sans", sans-serif' text-anchor="start"  textLength="15.58" lengthAdjust="spacingAndGlyphs" stroke="#fff" stroke-width="0.35">of</text>
<text x="582.6" y="47.7" font-size="18" fill="#fff" font-family='"Liberation Sans", sans-serif' text-anchor="start"  textLength="105.76" lengthAdjust="spacingAndGlyphs" stroke="#fff" stroke-width="0.35">radialvelocity</text>
<text x="695.1" y="47.7" font-size="18" fill="#fff" font-family='"Liberation Sans", sans-serif' text-anchor="start"  textLength="46.64" lengthAdjust="spacingAndGlyphs" stroke="#fff" stroke-width="0.35">using:</text>
<text x="749.8" y="47.7" font-size="18" fill="#fff" font-family='"Liberation Sans", sans-serif' text-anchor="start"  textLength="60.45" lengthAdjust="spacingAndGlyphs" stroke="#fff" stroke-width="0.35">rhb_3d.</text>
<polygon points="623,179 736.2,179 737.7,175 738.2,179 786,179 786,195.9 795.5,195.9 798.2,192 798.2,179 833,179 833,207.1 979,207.1 979,298.8 936,298.8 936,287.5 850,287.5 845.7,298.8 623,298.8" fill="#005010" />
<polygon points="657.931,179.021 652.722,185.097 649.25,191.174 651.854,200.722 655.326,209.403 657.062,218.083 668.347,225.028 682.236,231.104 699.597,236.312 715.222,239.785 730.847,242.389 791.611,242.389 818,241.521 798,241.521 811.889,241.868 839.667,243.257 863.972,246.729 881.333,251.069 891.75,254.542 900.431,258.882 910.847,258.014 929.944,249.333 947.306,241.521 964.667,234.576 979.076,229.368 979,207.1 833,207.1 833,179 798.2,179 798.2,192 795.5,195.9 786,195.9 786,179 738.2,179 737.7,175 736.2,179" fill="#058515" />
<polygon points="765.569,179.021 760.361,185.097 757.757,190.306 765.569,195.514 777.722,198.986 791.611,201.59 818,203.847 798,202.979 811.889,203.847 824.042,205.583 833.069,207.146 833,179 798.2,179 798.2,192 795.5,195.9 786,195.9 786,179" fill="#05a814" />
<polygon points="823.174,298.812 841.403,288.396 848.347,285.792 854.424,287.007 850.083,287.528 845.743,298.812" fill="#b4b4b4" />
<rect x="622.5" y="29.5" width="426.0" height="282.0" fill="none" stroke="#fff" stroke-width="1"/>
<line x1="622.5" y1="57.5" x2="634" y2="57.5" stroke="#fff" stroke-width="1" />
<line x1="1037" y1="57.5" x2="1048.5" y2="57.5" stroke="#fff" stroke-width="1" />
<line x1="622.5" y1="85.5" x2="634" y2="85.5" stroke="#fff" stroke-width="1" />
<line x1="1037" y1="85.5" x2="1048.5" y2="85.5" stroke="#fff" stroke-width="1" />
<line x1="622.5" y1="114.5" x2="634" y2="114.5" stroke="#fff" stroke-width="1" />
<line x1="1037" y1="114.5" x2="1048.5" y2="114.5" stroke="#fff" stroke-width="1" />
<line x1="622.5" y1="142.5" x2="634" y2="142.5" stroke="#fff" stroke-width="1" />
<line x1="1037" y1="142.5" x2="1048.5" y2="142.5" stroke="#fff" stroke-width="1" />
<line x1="622.5" y1="170.5" x2="634" y2="170.5" stroke="#fff" stroke-width="1" />
<line x1="1037" y1="170.5" x2="1048.5" y2="170.5" stroke="#fff" stroke-width="1" />
<line x1="622.5" y1="198.5" x2="634" y2="198.5" stroke="#fff" stroke-width="1" />
<line x1="1037" y1="198.5" x2="1048.5" y2="198.5" stroke="#fff" stroke-width="1" />
<line x1="622.5" y1="226.5" x2="634" y2="226.5" stroke="#fff" stroke-width="1" />
<line x1="1037" y1="226.5" x2="1048.5" y2="226.5" stroke="#fff" stroke-width="1" />
<line x1="622.5" y1="255.5" x2="634" y2="255.5" stroke="#fff" stroke-width="1" />
<line x1="1037" y1="255.5" x2="1048.5" y2="255.5" stroke="#fff" stroke-width="1" />
<line x1="622.5" y1="283.5" x2="634" y2="283.5" stroke="#fff" stroke-width="1" />
<line x1="1037" y1="283.5" x2="1048.5" y2="283.5" stroke="#fff" stroke-width="1" />
<line x1="675.5" y1="29.5" x2="675.5" y2="37" stroke="#fff" stroke-width="1" />
<line x1="675.5" y1="304" x2="675.5" y2="311.5" stroke="#fff" stroke-width="1" />
<line x1="728.5" y1="29.5" x2="728.5" y2="37" stroke="#fff" stroke-width="1" />
<line x1="728.5" y1="304" x2="728.5" y2="311.5" stroke="#fff" stroke-width="1" />
<line x1="782.5" y1="29.5" x2="782.5" y2="37" stroke="#fff" stroke-width="1" />
<line x1="782.5" y1="304" x2="782.5" y2="311.5" stroke="#fff" stroke-width="1" />
<line x1="835.5" y1="29.5" x2="835.5" y2="37" stroke="#fff" stroke-width="1" />
<line x1="835.5" y1="304" x2="835.5" y2="311.5" stroke="#fff" stroke-width="1" />
<line x1="888.5" y1="29.5" x2="888.5" y2="37" stroke="#fff" stroke-width="1" />
<line x1="888.5" y1="304" x2="888.5" y2="311.5" stroke="#fff" stroke-width="1" />
<line x1="942.5" y1="29.5" x2="942.5" y2="37" stroke="#fff" stroke-width="1" />
<line x1="942.5" y1="304" x2="942.5" y2="311.5" stroke="#fff" stroke-width="1" />
<line x1="995.5" y1="29.5" x2="995.5" y2="37" stroke="#fff" stroke-width="1" />
<line x1="995.5" y1="304" x2="995.5" y2="311.5" stroke="#fff" stroke-width="1" />
<text x="619.5" y="29" font-size="10" fill="#fff" font-family='"Liberation Sans", sans-serif' text-anchor="end" >20</text>
<text x="619.5" y="85.4" font-size="10" fill="#fff" font-family='"Liberation Sans", sans-serif' text-anchor="end" >16</text>
<text x="619.5" y="141.8" font-size="10" fill="#fff" font-family='"Liberation Sans", sans-serif' text-anchor="end" >12</text>
<text x="619.5" y="198.2" font-size="10" fill="#fff" font-family='"Liberation Sans", sans-serif' text-anchor="end" >8</text>
<text x="619.5" y="254.6" font-size="10" fill="#fff" font-family='"Liberation Sans", sans-serif' text-anchor="end" >4</text>
<text x="619.5" y="311" font-size="10" fill="#fff" font-family='"Liberation Sans", sans-serif' text-anchor="end" >0</text>
<text x="622.5" y="322.2" font-size="10" fill="#fff" font-family='"Liberation Sans", sans-serif' text-anchor="middle" >0.0</text>
<text x="729" y="322.2" font-size="10" fill="#fff" font-family='"Liberation Sans", sans-serif' text-anchor="middle" >5.9</text>
<text x="835.5" y="322.2" font-size="10" fill="#fff" font-family='"Liberation Sans", sans-serif' text-anchor="middle" >11.8</text>
<text x="942" y="322.2" font-size="10" fill="#fff" font-family='"Liberation Sans", sans-serif' text-anchor="middle" >17.8</text>
<text x="1038.6" y="322.2" font-size="10" fill="#fff" font-family='"Liberation Sans", sans-serif' text-anchor="start" >23</text>
<text x="835.5" y="331" font-size="10" fill="#fff" font-family='"Liberation Sans", sans-serif' text-anchor="middle" >Distance in km</text>
<text transform="translate(603,170.5) rotate(-90)" font-size="13" font-family='"Liberation Mono", monospace' fill="#fff" text-anchor="middle">km above MSL</text>
<line x1="1049" y1="28.5" x2="1132" y2="28.5" stroke="#b0b0b0" stroke-width="1" />
<line x1="1049" y1="335.5" x2="1132" y2="335.5" stroke="#b0b0b0" stroke-width="1" />
<text x="1050.4" y="43.8" font-size="12" fill="#fff" font-family='"Liberation Sans", sans-serif' text-anchor="start"  textLength="74.59" lengthAdjust="spacingAndGlyphs">radialvelocity</text>
<rect x="1050" y="52.4" width="10" height="11" fill="#ff0000" />
<text x="1065.5" y="62.1" font-size="12" fill="#fff" font-family='"Liberation Sans", sans-serif' text-anchor="start" >24.0</text>
<rect x="1050" y="63.4" width="10" height="11" fill="#d40000" />
<text x="1065.5" y="73.1" font-size="12" fill="#fff" font-family='"Liberation Sans", sans-serif' text-anchor="start" >22.0</text>
<rect x="1050" y="74.4" width="10" height="11" fill="#8b0000" />
<text x="1065.5" y="84.1" font-size="12" fill="#fff" font-family='"Liberation Sans", sans-serif' text-anchor="start" >20.0</text>
<rect x="1050" y="85.4" width="10" height="11" fill="#e05a0a" />
<text x="1065.5" y="95.1" font-size="12" fill="#fff" font-family='"Liberation Sans", sans-serif' text-anchor="start" >18.0</text>
<rect x="1050" y="96.4" width="10" height="11" fill="#ff8000" />
<text x="1065.5" y="106.1" font-size="12" fill="#fff" font-family='"Liberation Sans", sans-serif' text-anchor="start" >16.0</text>
<rect x="1050" y="107.4" width="10" height="11" fill="#ff6060" />
<text x="1065.5" y="117.1" font-size="12" fill="#fff" font-family='"Liberation Sans", sans-serif' text-anchor="start" >14.0</text>
<rect x="1050" y="118.4" width="10" height="11" fill="#ff9090" />
<text x="1065.5" y="128.1" font-size="12" fill="#fff" font-family='"Liberation Sans", sans-serif' text-anchor="start" >12.0</text>
<rect x="1050" y="129.4" width="10" height="11" fill="#ffc0c8" />
<text x="1065.5" y="139.1" font-size="12" fill="#fff" font-family='"Liberation Sans", sans-serif' text-anchor="start" >10.0</text>
<rect x="1050" y="140.4" width="10" height="11" fill="#ffff00" />
<text x="1065.5" y="150.1" font-size="12" fill="#fff" font-family='"Liberation Sans", sans-serif' text-anchor="start" >8.0</text>
<rect x="1050" y="151.4" width="10" height="11" fill="#ffb428" />
<text x="1065.5" y="161.1" font-size="12" fill="#fff" font-family='"Liberation Sans", sans-serif' text-anchor="start" >6.0</text>
<rect x="1050" y="162.4" width="10" height="11" fill="#d89868" />
<text x="1065.5" y="172.1" font-size="12" fill="#fff" font-family='"Liberation Sans", sans-serif' text-anchor="start" >4.0</text>
<rect x="1050" y="173.4" width="10" height="11" fill="#b0500a" />
<text x="1065.5" y="183.1" font-size="12" fill="#fff" font-family='"Liberation Sans", sans-serif' text-anchor="start" >2.0</text>
<rect x="1050" y="184.4" width="10" height="11" fill="#b4b4b4" />
<text x="1065.5" y="194.1" font-size="12" fill="#fff" font-family='"Liberation Sans", sans-serif' text-anchor="start" >0.0</text>
<rect x="1050" y="195.4" width="10" height="11" fill="#005010" />
<text x="1065.5" y="205.1" font-size="12" fill="#fff" font-family='"Liberation Sans", sans-serif' text-anchor="start" >−2.0</text>
<rect x="1050" y="206.4" width="10" height="11" fill="#058515" />
<text x="1065.5" y="216.1" font-size="12" fill="#fff" font-family='"Liberation Sans", sans-serif' text-anchor="start" >−4.0</text>
<rect x="1050" y="217.4" width="10" height="11" fill="#05a814" />
<text x="1065.5" y="227.1" font-size="12" fill="#fff" font-family='"Liberation Sans", sans-serif' text-anchor="start" >−6.0</text>
<rect x="1050" y="228.4" width="10" height="11" fill="#00ff28" />
<text x="1065.5" y="238.1" font-size="12" fill="#fff" font-family='"Liberation Sans", sans-serif' text-anchor="start" >−8.0</text>
<rect x="1050" y="239.4" width="10" height="11" fill="#00c0ff" />
<text x="1065.5" y="249.1" font-size="12" fill="#fff" font-family='"Liberation Sans", sans-serif' text-anchor="start" >−10.0</text>
<rect x="1050" y="250.4" width="10" height="11" fill="#0080ff" />
<text x="1065.5" y="260.1" font-size="12" fill="#fff" font-family='"Liberation Sans", sans-serif' text-anchor="start" >−12.0</text>
<rect x="1050" y="261.4" width="10" height="11" fill="#0010c8" />
<text x="1065.5" y="271.1" font-size="12" fill="#fff" font-family='"Liberation Sans", sans-serif' text-anchor="start" >−14.0</text>
<rect x="1050" y="272.4" width="10" height="11" fill="#0020a0" />
<text x="1065.5" y="282.1" font-size="12" fill="#fff" font-family='"Liberation Sans", sans-serif' text-anchor="start" >−16.0</text>
<rect x="1050" y="283.4" width="10" height="11" fill="#000080" />
<text x="1065.5" y="293.1" font-size="12" fill="#fff" font-family='"Liberation Sans", sans-serif' text-anchor="start" >−18.0</text>
<rect x="1050" y="294.4" width="10" height="11" fill="#9090c0" />
<text x="1065.5" y="304.1" font-size="12" fill="#fff" font-family='"Liberation Sans", sans-serif' text-anchor="start" >−20.0</text>
<rect x="1050" y="305.4" width="10" height="11" fill="#505080" />
<text x="1065.5" y="315.1" font-size="12" fill="#fff" font-family='"Liberation Sans", sans-serif' text-anchor="start" >−22.0</text>
<rect x="1050" y="316.4" width="10" height="11" fill="#707070" />
<text x="1065.5" y="326.1" font-size="12" fill="#fff" font-family='"Liberation Sans", sans-serif' text-anchor="start" >−24.0</text>
<g transform="translate(577,336)"><rect x="0" y="0" width="46" height="48" fill="#989898"/><rect x="1" y="1" width="44" height="46" fill="#191970"/><g fill="none" stroke="#ffff00" stroke-linecap="round" stroke-linejoin="round" shape-rendering="geometricPrecision"><path d="M7 12.6 C7.8 10.5 10.5 8.8 13 8.2 C15 7.6 18 7.4 22 8.5 C25 9.6 27.5 11.4 30.5 11.8 C33.5 12 36 10.8 37.8 9.2" stroke-width="2.3"/><path d="M37.8 9.2 C37.2 11.5 36.5 12.8 35 14 C31 17 26 19 22.5 21.5 C18.5 25 14 30 10.5 34 L6.2 39.6" stroke-width="2"/><path d="M6.2 39.6 C8 37.8 10.5 36.8 13 36.4 C15 36.1 18.5 36.4 22 37.8 C25 39.2 27.5 40.3 30 40.4 C33 40.5 35.5 39 36.8 37.6 C37.8 36.6 38.4 36 38.9 35.2" stroke-width="2.3"/></g></g>
<g transform="translate(624,336)"><rect x="0" y="0" width="46" height="48" fill="#989898"/><rect x="1" y="1" width="44" height="46" fill="#191970"/><text x="23" y="9" font-size="6.8" font-weight="bold" font-family='"Liberation Sans", sans-serif' fill="#ffff00" text-anchor="middle" textLength="24.5" lengthAdjust="spacingAndGlyphs">CROSS</text><text x="23" y="44" font-size="6.8" font-weight="bold" font-family='"Liberation Sans", sans-serif' fill="#ffff00" text-anchor="middle" textLength="30" lengthAdjust="spacingAndGlyphs">SECTION</text><polygon points="13,13.5 34,13.5 34,33.5 13,33.5" fill="url(#dith_ffff00)"/><g fill="none" stroke="#ffff00" stroke-width="1"><rect x="4.5" y="17.5" width="22" height="20"/><polyline points="4.5,17.5 18.5,10.5 40.5,10.5 40.5,30.5 26.5,37.5"/><line x1="26.5" y1="17.5" x2="40.5" y2="10.5"/><line x1="13.5" y1="13" x2="13.5" y2="33.5"/><line x1="34.5" y1="13.5" x2="34.5" y2="33.5"/><line x1="13" y1="33.5" x2="34" y2="33.5"/></g></g>
<g transform="translate(671,336)"><rect x="0" y="0" width="46" height="48" fill="#989898"/><rect x="1" y="1" width="44" height="46" fill="#696969"/><text x="23" y="9" font-size="6.8" font-weight="bold" font-family='"Liberation Sans", sans-serif' fill="#e0e0e0" text-anchor="middle" textLength="24.5" lengthAdjust="spacingAndGlyphs">CROSS</text><text x="23" y="44" font-size="6.8" font-weight="bold" font-family='"Liberation Sans", sans-serif' fill="#e0e0e0" text-anchor="middle" textLength="30" lengthAdjust="spacingAndGlyphs">SECTION</text><polygon points="13,13.5 34,13.5 34,33.5 13,33.5" fill="url(#dith_e0e0e0)"/><g fill="none" stroke="#e0e0e0" stroke-width="1"><rect x="4.5" y="17.5" width="22" height="20"/><polyline points="4.5,17.5 18.5,10.5 40.5,10.5 40.5,30.5 26.5,37.5"/><line x1="26.5" y1="17.5" x2="40.5" y2="10.5"/><line x1="13.5" y1="13" x2="13.5" y2="33.5"/><line x1="34.5" y1="13.5" x2="34.5" y2="33.5"/><line x1="13" y1="33.5" x2="34" y2="33.5"/></g></g>
<g transform="translate(718,336)"><rect x="0" y="0" width="46" height="48" fill="#989898"/><rect x="1" y="1" width="44" height="46" fill="#696969"/><text x="23" y="9" font-size="6.8" font-weight="bold" font-family='"Liberation Sans", sans-serif' fill="#e0e0e0" text-anchor="middle" textLength="24.5" lengthAdjust="spacingAndGlyphs">CROSS</text><text x="23" y="44" font-size="6.8" font-weight="bold" font-family='"Liberation Sans", sans-serif' fill="#e0e0e0" text-anchor="middle" textLength="30" lengthAdjust="spacingAndGlyphs">SECTION</text><polygon points="13,13.5 34,13.5 34,33.5 13,33.5" fill="url(#dith_e0e0e0)"/><g fill="none" stroke="#e0e0e0" stroke-width="1"><rect x="4.5" y="17.5" width="22" height="20"/><polyline points="4.5,17.5 18.5,10.5 40.5,10.5 40.5,30.5 26.5,37.5"/><line x1="26.5" y1="17.5" x2="40.5" y2="10.5"/><line x1="13.5" y1="13" x2="13.5" y2="33.5"/><line x1="34.5" y1="13.5" x2="34.5" y2="33.5"/><line x1="13" y1="33.5" x2="34" y2="33.5"/></g></g>
<line x1="571.5" y1="3" x2="571.5" y2="386" stroke="#fff" stroke-width="1" stroke-dasharray="1 1"/>
<line x1="572" y1="2.5" x2="1133" y2="2.5" stroke="#fff" stroke-width="1" stroke-dasharray="1 1"/>
<line x1="1132.5" y1="3" x2="1132.5" y2="386" stroke="#fff" stroke-width="1" stroke-dasharray="1 1"/>
<line x1="572" y1="386.5" x2="1133" y2="386.5" stroke="#fff" stroke-width="1" stroke-dasharray="1 1"/>
</g>
<rect x="1135" y="420" width="6" height="285" fill="#fff" />
<rect x="5" y="427" width="569" height="445" fill="#000" />
<text x="17.8" y="448" font-size="24" fill="#ffff00" font-family='"Liberation Sans", sans-serif' text-anchor="start"  textLength="240.77" lengthAdjust="spacingAndGlyphs" stroke="#ffff00" stroke-width="0.35">11−aug−1997,14:05:00</text>
<text x="273.9" y="448" font-size="24" fill="#fff" font-family='"Liberation Sans", sans-serif' text-anchor="start"  textLength="68.04" lengthAdjust="spacingAndGlyphs" stroke="#fff" stroke-width="0.35">maxdz</text>
<text x="351.1" y="448" font-size="24" fill="#fff" font-family='"Liberation Sans", sans-serif' text-anchor="start"  textLength="42.79" lengthAdjust="spacingAndGlyphs" stroke="#fff" stroke-width="0.35">plot.</text>
<text x="410" y="448" font-size="24" fill="#fff" font-family='"Liberation Sans", sans-serif' text-anchor="start"  textLength="67.94" lengthAdjust="spacingAndGlyphs" stroke="#fff" stroke-width="0.35">maxdz</text>
<text x="487.2" y="448" font-size="24" fill="#fff" font-family='"Liberation Sans", sans-serif' text-anchor="start"  textLength="42.79" lengthAdjust="spacingAndGlyphs" stroke="#fff" stroke-width="0.35">plot.</text>
<clipPath id="rclip"><rect x="55" y="458" width="433" height="337"/></clipPath>
<g clip-path="url(#rclip)">
<polygon points="189,505 201.875,505 201.875,510 200,513.125 200,516 191.875,516 189,512.5" fill="#00e696" />
<polygon points="191,505.25 200,505.25 200,513.125 194.375,513.125 191,510" fill="#00704a" />
<polygon points="191,505.25 194,505.25 194,508.125 191,508.125" fill="#c8c8c8" />
<polygon points="175,519 186,519 186,523.75 182.5,526.25 175,526.25" fill="#00e696" />
<polygon points="164,524 169,524 169,521 172,521 172,526.875 175,526.875 175,529.75 172.25,529.75 172.25,531.875 164,531.875" fill="#00e696" />
<polygon points="144,524 150,524 153.125,527.25 153.125,535 144,535 144,541 133.125,541 133.125,538.125 136.25,535 139,530 141.25,526.875" fill="#00704a" />
<polygon points="150,527.25 153.125,527.25 153.125,530.25 150,530.25" fill="#00e696" />
<polygon points="147.25,543.125 157.75,543.125 157.75,556.25 155,557.5 155,562.5 151.875,567.5 150,573.75 150,582 133.125,582 133.125,576.25 136.25,573.75 139,568.75 139,562.5 141.25,554 144.375,551.25 147.25,549" fill="#00704a" />
<polygon points="147.25,546 155,546 157.75,549 157.75,556.25 155,557.5 155,554 150,554 150,551.25 147.25,549" fill="#c8c8c8" />
<polygon points="144.375,549 147.25,549 147.25,551.875 144.375,551.875" fill="#00e696" />
<polygon points="139,562.75 141.25,562.75 141.25,565.25 139,565.25" fill="#00e696" />
<polygon points="150,568.125 153.125,568.125 153.125,573.75 150,573.75" fill="#00e696" />
<polygon points="133.125,576.25 136.25,576.25 136.25,579.375 133.125,579.375" fill="#00e696" />
<polygon points="153.125,560 155,560 155,563.125 153.125,563.125" fill="#00e696" />
<polygon points="197.25,568.125 200,568.125 200,571 202.25,571 202.25,573.75 197.25,573.75" fill="#00e696" />
<polygon points="138.75,570 152.5,570 152.5,573.75 150,573.75 150,582.5 147.25,586.25 147.25,596.25 150,596.25 150,606.25 158.125,606.25 158.125,609.375 161.25,609.375 161.25,617.5 158.125,620 161.25,622.5 161.25,632.5 150,637.5 144.375,643.125 136.25,643.125 133.125,641.875 130,641.875 130,645 119.375,645 119.375,641.875 111.25,639.375 111.25,632.5 108.5,631.25 108.5,601.25 111.25,598.125 111.25,592.5 114,589.375 119.375,586.25 130,585 130,581.25 133.125,578.125 136.25,575 138.75,572.5" fill="#00704a" />
<polygon points="136.25,585 141.25,585 141.25,591.875 136.25,593.75 136.25,597.5 125,597.5 125,591.25 133.125,590.625" fill="#c8c8c8" />
<polygon points="108.5,603.75 116.25,603.75 119.375,607.5 125,608.75 130,611.875 130,622.5 125,622.5 121.875,618.75 114,617.5 114,611.875 108.5,608.75" fill="#c8c8c8" />
<polygon points="119.375,598.125 122.25,598.125 122.25,601 119.375,601" fill="#c8c8c8" />
<polygon points="141.25,596.25 150,596.25 150,606.25 141.25,606.25" fill="#c8c8c8" />
<polygon points="144,596.25 150,596.25 150,603.75 144,603.75" fill="#dc9531" />
<polygon points="141.25,611.875 147.25,611.875 147.25,617.5 141.25,617.5" fill="#c8c8c8" />
<polygon points="155.625,609.375 161.25,609.375 161.25,617.5 155.625,617.5" fill="#c8c8c8" />
<polygon points="147.25,623.125 158.125,623.125 161.25,626.25 161.25,633.75 141.25,633.75 141.25,630 144.375,626.875" fill="#c8c8c8" />
<polygon points="153.125,625.625 155,625.625 155,631 153.125,631" fill="#dc9531" />
<polygon points="150,570 152.5,570 152.5,573.75 150,573.75" fill="#00e696" />
<polygon points="133.125,575.625 136.25,575.625 136.25,578.75 133.125,578.75" fill="#00e696" />
<polygon points="128.125,585 130.625,585 130.625,587.5 128.125,587.5" fill="#00e696" />
<polygon points="119.375,586.875 122.25,586.875 122.25,589.75 119.375,589.75" fill="#00e696" />
<polygon points="128.125,601 130.625,601 130.625,603.75 128.125,603.75" fill="#00e696" />
<polygon points="144,586.875 147.25,586.875 147.25,595 144,595" fill="#00e696" />
<polygon points="138.75,609.375 147.25,609.375 147.25,611.875 138.75,611.875" fill="#00e696" />
<polygon points="150,615 153.125,615 153.125,618.125 150,618.125" fill="#00e696" />
<polygon points="138.75,620 147.25,620 147.25,623.125 138.75,623.125" fill="#00e696" />
<polygon points="133.125,623.125 135,623.125 135,628.125 133.125,628.125" fill="#00e696" />
<polygon points="119.375,623.125 122.25,623.125 122.25,628.125 119.375,628.125" fill="#00e696" />
<polygon points="150,634.375 161.25,634.375 161.25,636.875 150,636.875" fill="#00e696" />
<polygon points="138.75,636.875 150,636.875 150,640 138.75,640" fill="#00e696" />
<polygon points="133.125,641.875 136.25,641.875 136.25,645 133.125,645" fill="#00e696" />
<polygon points="125,645 130,645 130,647.5 125,647.5" fill="#00e696" />
<polygon points="165,609.375 169,609.375 169,617.5 165,617.5" fill="#00e696" />
<polygon points="169,604.375 175,604.375 175,608.5 169,608.5" fill="#00e696" />
<polygon points="161.25,626.25 165.625,626.25 165.625,629.375 161.25,629.375" fill="#00e696" />
<polygon points="161.25,609.375 165,609.375 165,611.875 161.25,611.875" fill="#00e696" />
<polygon points="137.5,611.875 139,611.875 139,620 137.5,620" fill="#00e696" />
<polygon points="147.25,609 150,609 150,611.875 147.25,611.875" fill="#000" />
<polygon points="136.25,620 138.75,620 138.75,622.5 136.25,622.5" fill="#000" />
<polygon points="147.25,620 150,620 150,623.125 147.25,623.125" fill="#000" />
<polygon points="191,607 202,607 203,611 209,612 216,611 221,609 220,602 220,596 232,596 232,602 228,606 226,611 221,619 219,625 232,626 246,626 246,634 232,634 226,636 220,638 216,640 211,643 212,648 209,652 202,653 196,652 193,650 192,641 191,636 186,629 186,619 191,616" fill="#00e696" />
<polygon points="220,596 232,596 232,602 228,606 226,611 221,616 220,606" fill="#00b4e0" />
<polygon points="214,616 220,616 220,622 214,622" fill="#00b4e0" />
<polygon points="186,618 189,618 189,623 186,623" fill="#00b4e0" />
<polygon points="209,634 216,634 216,640 209,640" fill="#00b4e0" />
<polygon points="219,626 232,627 246,627 246,633 232,633 220,636" fill="#00b4e0" />
<polygon points="224,628 232,628 236,629 236,631 224,631" fill="#00e696" />
<polygon points="192,609 200,609 201,616 202,623 197,626 197,631 194,632 192,629 191,621" fill="#00704a" />
<polygon points="194.5,612 197,612 197,617.5 194.5,617.5" fill="#c8c8c8" />
<polygon points="203,640 210,640 211,648 207,652 201,652 201,650 208,650 208,643 203,643" fill="#00704a" />
<polygon points="197.5,626 201,623 207,623 208,626 205,632 205,638 201,641 200,650 194,650 194,641 197,638 197.5,632" fill="#dc9531" />
<polygon points="203,622 208,622 208,625 203,625" fill="#c8c8c8" />
<polygon points="197,631 200,631 200,638 197,638" fill="#c8c8c8" />
<polygon points="201,643 208,643 208,650 201,650" fill="#c8c8c8" />
<polygon points="194,636 197.5,636 197.5,641 194,641" fill="#c8c8c8" />
<polygon points="206,613 208,613 208,616 206,616" fill="#00704a" />
<polygon points="228,618 231,618 231,620.5 228,620.5" fill="#00704a" />
<polygon points="231,613 235,613 235,617.5 231,617.5" fill="#00b4e0" />
<polygon points="238,622 241,622 241,627 238,627" fill="#0078e6" />
<polygon points="240,616 242,616 242,617.5 240,617.5" fill="#0078e6" />
<polygon points="246,616 248,616 248,617.5 246,617.5" fill="#0078e6" />
<polygon points="242,614 243,614 243,616 242,616" fill="#0078e6" />
<polygon points="241,633 245,633 245,635.5 241,635.5" fill="#0078e6" />
<polygon points="232,634 236,634 236,635.5 232,635.5" fill="#00b4e0" />
<polygon points="196,654 203,655 214,655 220,652 226,652 230,660 230,666 224,665 220,661 214,660 204,660 196,658" fill="#00e696" />
<polygon points="220,652 226,652 230,660 230,666 224,665 223,660" fill="#00b4e0" />
<polygon points="203,656 206,656 206,660 203,660" fill="#00b4e0" />
<polygon points="197,656 202,656 202,658.5 197,658.5" fill="#00b4e0" />
<polygon points="215,655 222,655 222,657.5 215,657.5" fill="#00704a" />
<polygon points="220,666 232,666 232,670 220,670" fill="#00b4e0" />
<polygon points="201,671 235,669 232,676 224,684 218,686 201,686 200,676" fill="#00e696" />
<polygon points="208,675 232,670 224,681 218,685 209,683" fill="#00704a" />
<polygon points="212,674 220,674 220,682 212,682" fill="#c8c8c8" />
<polygon points="183.125,593.125 191.25,593.125 191.25,590 196.875,590 196.875,586.875 201.875,586.875 201.875,590.625 198.75,593.75 193.75,593.75 193.75,596.875 183.125,596.875" fill="#00e696" />
<polygon points="197.5,570 201.875,570 201.875,573.75 197.5,573.75" fill="#00e696" />
<polygon points="206.25,583.75 212.5,581.875 216.25,578.75 225,580 231.25,578.75 238.75,580 242.5,581.25 244,586.25 237.5,591.25 232.5,595 236.25,600 232.5,602.5 222.5,601.25 220,598.75 216.25,595 212.5,591.25 206.25,590" fill="#00b4e0" />
<polygon points="215,585 225,582.5 232.5,581.25 238.75,581.875 238.75,586.25 232.5,591.25 228.75,595 220,595 215.625,591.25" fill="#00e696" />
<polygon points="217.5,587.5 225,585 231.25,582.5 237.5,582.5 237.5,585.625 231.25,589.375 226.25,593.125 218.75,593.75" fill="#c8c8c8" />
<polygon points="220.25,587.5 223.75,587.5 223.75,593.125 220.25,593.125" fill="#dc9531" />
<polygon points="230,584 234.375,583.5 232.5,585.625 230,586.875" fill="#dc9531" />
<polygon points="207.5,583.75 212.5,583.75 212.5,588.75 207.5,588.75" fill="#00704a" />
<polygon points="183.125,593.125 191.25,593.125 191.25,590 196.25,590 196.25,586.875 202.5,586.875 202.5,590.625 198.75,590.625 198.75,593.75 193.75,593.75 193.75,597.5 183.125,597.5" fill="#00e696" />
<polygon points="196.875,568.125 200,568.125 200,570.625 202.25,570.625 202.25,573.75 196.875,573.75" fill="#00e696" />
<polygon points="206.875,581.25 217.5,580 227.5,578.125 235,577.5 242.5,578.125 243.125,583.75 250,580 250,573.75 243.125,573.75 245,570 250,567.5 255,566.25 254.375,562.5 260,563.125 259.375,570 253.125,573.125 253.125,578.75 250,582.5 242.5,586.25 235,590 235,602.5 230,602.5 230,597.5 225,600 225,606.25 220.625,606.25 220.625,599.375 216.25,596.25 211.875,592.5 206.875,590" fill="#00b4e0" />
<polygon points="212.5,582.5 217.5,580.625 226.25,579.375 235,578.125 240,580 240,585 235,588.75 230,592.5 227.5,596.25 217.5,597.5 212.5,592.5" fill="#00e696" />
<polygon points="206.875,582.5 212.5,582.5 212.5,590 206.875,590" fill="#00e696" />
<polygon points="208.125,583.75 211.875,583.75 211.875,588.75 208.125,588.75" fill="#00704a" />
<polygon points="249.375,569.375 253.125,569.375 253.125,573.125 249.375,573.125" fill="#00e696" />
<polygon points="216.25,585 226.25,581.25 235,580.625 238.125,582.5 238.125,585.625 232.5,588.75 227.5,592.5 223.75,595 217.5,595 216.25,591.25" fill="#00704a" />
<polygon points="217.5,588.125 221.25,586.875 227.5,583.75 232.5,581.25 236.875,581.875 236.875,585 231.25,588.125 226.25,591.25 223.75,593.75 218.125,593.75" fill="#c8c8c8" />
<polygon points="220,588.75 223.75,588.75 223.75,593.125 220,593.125" fill="#dc9531" />
<polygon points="229.375,583.75 233.75,583.75 232.5,585.625 230,587.5" fill="#dc9531" />
<line x1="217.5" y1="580.625" x2="229.375" y2="591.25" stroke="#fff" stroke-width="2" shape-rendering="geometricPrecision"/>
<polygon points="243.125,587.5 255,587.5 255,594.375 243.125,594.375" fill="#00b4e0" />
<polygon points="244.375,588.5 253.75,588.5 253.75,593.5 244.375,593.5" fill="#00e696" />
<polygon points="246.25,590.625 251.25,590.625 251.25,591.875 246.25,591.875" fill="#00704a" />
<polygon points="267.5,587.5 272.5,587.5 272.5,594.375 267.5,594.375" fill="#00b4e0" />
<polygon points="268.5,588.75 271.875,588.75 271.875,592.5 268.5,592.5" fill="#00e696" />
<polygon points="264.375,578.75 272.5,578.75 272.5,584.375 264.375,584.375" fill="#00b4e0" />
<polygon points="272.5,569.375 278.75,569.375 278.75,583.75 272.5,583.75" fill="#00b4e0" />
<polygon points="273.125,570 278.125,570 278.125,575.625 273.125,575.625" fill="#00e696" />
<polygon points="273.125,578.125 275.625,578.125 275.625,581.25 273.125,581.25" fill="#00e696" />
<polygon points="282.5,576.875 293.125,576.875 293.125,582.5 282.5,582.5" fill="#00b4e0" />
<polygon points="283.75,578.125 291.25,578.125 291.25,581.25 283.75,581.25" fill="#00e696" />
<polygon points="311.25,585 315,585 315,588.75 311.25,588.75" fill="#00b4e0" />
<polygon points="256.25,586.875 258.75,586.875 258.75,588.75 256.25,588.75" fill="#00b4e0" />
<polygon points="278.75,572.5 281.875,572.5 281.875,574.375 278.75,574.375" fill="#00b4e0" />
<polygon points="232.5,595 235,595 235,602.5 232.5,602.5" fill="#00e696" />
<polygon points="231.25,613.125 235,613.125 235,617.5 231.25,617.5" fill="#00b4e0" />
<polygon points="227.5,617.5 231.25,617.5 231.25,621.25 227.5,621.25" fill="#00704a" />
<polygon points="239.375,615 242.5,615 242.5,617.5 239.375,617.5" fill="#0078e6" />
<polygon points="238.75,622.5 241.25,622.5 241.25,626.25 238.75,626.25" fill="#00b4e0" />
<polygon points="219.75,627.5 232.25,623.75 246,626.25 246,633.75 232.25,635 219.75,636.25" fill="#00b4e0" />
<polygon points="223.5,628.75 241,627.5 241,632.5 223.5,633.75" fill="#00e696" />
<polygon points="246,627.6 260.4,626.8 276.4,627.2 298.8,627.6 298.8,632.4 286,633.6 276.4,632.96 246,632.96" fill="#0078e6" />
<polygon points="248.4,628 260.4,627.6 260.4,632.4 248.4,632.64" fill="#1e3cdc" />
<polygon points="276.4,627.6 294,628.4 297.2,630.4 294,632.8 284.4,634.4 276.4,633.2" fill="#3c1ee6" />
<polygon points="286,628.8 298.8,628 298.8,632 289.2,632.96" fill="#1e3cdc" />
<polygon points="271.6,631.2 279.6,631.2 278.8,637.6 275.6,643.2 271.6,644 270.8,637.6" fill="#3c1ee6" />
<polygon points="248.4,634.4 257.2,634.4 257.2,652 252.4,656.8 248.4,650.4" fill="#00b4e0" />
<polygon points="250,636 255.6,636 255.6,647.2 250,647.2" fill="#0078e6" />
<polygon points="259.6,624.8 271.6,624.8 273.2,634.4 270,639.2 268.4,647.2 265.2,652 262,656.8 254,656.8 252.4,652 254,644 256.4,636 258,629.6" fill="#00e696" />
<polygon points="260.4,626.4 270,626.4 270.8,633.6 266,637.6 264.4,644 261.2,652 257.2,655.2 254.8,652 256.4,644 258.8,636" fill="#00704a" />
<polygon points="264.4,631.2 270,631.2 270,636 266,636 264.4,634.4" fill="#c8c8c8" />
<polygon points="256,636 259.6,636 259.6,640.8 257.2,644 254.4,644 254.4,639.2" fill="#c8c8c8" />
<polygon points="260.4,624.8 264.4,624.8 264.4,628 260.4,628" fill="#c8c8c8" />
<polygon points="254,639.2 255.6,639.2 255.6,640.8 254,640.8" fill="#dc9531" />
<polygon points="265.2,634.4 267.6,634.4 267.6,636 265.2,636" fill="#dc9531" />
<polygon points="261.2,640.8 266.8,640.8 266,647.2 262,648.8" fill="#00e696" />
<polygon points="262,644 265.2,644 264.8,648 262.4,648" fill="#00b4e0" />
<polygon points="268.4,636 273.2,636 272.4,640.8 268.4,644" fill="#00b4e0" />
<polygon points="264,617 267,617 267,620 264,620" fill="#00b4e0" />
<polygon points="264,618 266,618 266,619 264,619" fill="#00b4e0" />
<polygon points="268,618 269,618 269,619 268,619" fill="#0078e6" />
<polygon points="271,612 273,612 273,615 271,615" fill="#0078e6" />
<polygon points="255,618 256,618 256,621 255,621" fill="#1e3cdc" />
<polygon points="254,617 256,617 256,619 254,619" fill="#0078e6" />
<polygon points="269,610 272,610 272,612 269,612" fill="#0078e6" />
<polygon points="276,613 278,613 278,616 276,616" fill="#0078e6" />
<polygon points="261,624 263,624 263,625 261,625" fill="#0078e6" />
<polygon points="264,619 266,619 266,622 264,622" fill="#1e3cdc" />
<polygon points="271,614 274,614 274,615 271,615" fill="#00b4e0" />
<polygon points="267,625 270,625 270,628 267,628" fill="#0078e6" />
<polygon points="261,611 263,611 263,614 261,614" fill="#0078e6" />
<polygon points="268,606 271,606 271,607 268,607" fill="#1e3cdc" />
<polygon points="275,615 277,615 277,618 275,618" fill="#00b4e0" />
<polygon points="274,617 275,617 275,618 274,618" fill="#0078e6" />
<polygon points="265,611 267,611 267,613 265,613" fill="#00b4e0" />
<polygon points="272,617 273,617 273,618 272,618" fill="#0078e6" />
<polygon points="267,611 268,611 268,612 267,612" fill="#0078e6" />
<polygon points="259,614 261,614 261,616 259,616" fill="#0078e6" />
<polygon points="266,625 269,625 269,627 266,627" fill="#0078e6" />
<polygon points="268,619 269,619 269,620 268,620" fill="#0078e6" />
<polygon points="264,613 265,613 265,616 264,616" fill="#0078e6" />
<polygon points="268,615 270,615 270,616 268,616" fill="#00b4e0" />
<polygon points="274,620 276,620 276,621 274,621" fill="#00b4e0" />
<polygon points="269,623 270,623 270,625 269,625" fill="#00b4e0" />
<polygon points="266,618 267,618 267,621 266,621" fill="#1e3cdc" />
<polygon points="256,611 259,611 259,614 256,614" fill="#00b4e0" />
<polygon points="269,615 270,615 270,618 269,618" fill="#1e3cdc" />
<polygon points="264,610 267,610 267,612 264,612" fill="#00b4e0" />
<polygon points="274,613 276,613 276,616 274,616" fill="#1e3cdc" />
<polygon points="263,623 265,623 265,624 263,624" fill="#0078e6" />
<polygon points="268,621 270,621 270,623 268,623" fill="#0078e6" />
<polygon points="258,624 261,624 261,626 258,626" fill="#0078e6" />
<polygon points="273,622 275,622 275,623 273,623" fill="#00b4e0" />
<polygon points="264,611 267,611 267,614 264,614" fill="#00b4e0" />
<polygon points="265,619 268,619 268,621 265,621" fill="#1e3cdc" />
<polygon points="266,612 268,612 268,614 266,614" fill="#0078e6" />
<polygon points="259,608 260,608 260,610 259,610" fill="#0078e6" />
<polygon points="262,607 264,607 264,608 262,608" fill="#00b4e0" />
<polygon points="270,620 272,620 272,621 270,621" fill="#0078e6" />
<polygon points="265,618 267,618 267,619 265,619" fill="#00b4e0" />
<polygon points="263,623 266,623 266,624 263,624" fill="#00b4e0" />
<polygon points="268,623 270,623 270,625 268,625" fill="#1e3cdc" />
<polygon points="261,625 262,625 262,626 261,626" fill="#0078e6" />
<polygon points="238.8,614.4 242.8,614.4 242.8,617.6 238.8,617.6" fill="#00b4e0" />
<polygon points="245.2,616 248.4,616 248.4,617.6 245.2,617.6" fill="#00b4e0" />
<polygon points="238.8,622.4 241.2,622.4 241.2,625.6 238.8,625.6" fill="#00b4e0" />
<polygon points="241.2,633.6 246,633.6 246,636 241.2,636" fill="#00b4e0" />
<polygon points="303.6,633.6 309.2,633.6 309.2,637.6 303.6,637.6" fill="#00b4e0" />
<polygon points="293.2,650.4 297.2,650.4 297.2,657.6 293.2,657.6" fill="#00b4e0" />
<polygon points="278,639.2 279.6,639.2 279.6,641.6 278,641.6" fill="#3c1ee6" />
<polygon points="286,648.8 286.8,648.8 286.8,651.2 286,651.2" fill="#3c1ee6" />
<polygon points="292.4,635.2 294,635.2 294,636 292.4,636" fill="#3c1ee6" />
<polygon points="281.2,624 282,624 282,626.4 281.2,626.4" fill="#3c1ee6" />
<polygon points="289.125,638.125 296,638.125 296,645 289.125,645" fill="#0078e6" />
<polygon points="291,639.375 294.75,639.375 294.75,643.75 291,643.75" fill="#1e3cdc" />
<polygon points="271,652.5 276,650.625 281,650 281,653.125 276,655 271,654.375" fill="#00e696" />
<polygon points="274.75,651 279.125,651 279.125,654 274.75,654" fill="#eeb522" />
<polygon points="249.75,655 264.75,655 263.5,665 264.75,677.5 263.5,685 253.5,685 252.25,677.5 247.25,670 247.25,665 252.25,662.5" fill="#00b4e0" />
<polygon points="253.5,657.5 262.25,657.5 261.625,665 257.25,670 254.75,665" fill="#00e696" />
<polygon points="254.75,665 262.25,667.5 263.5,677.5 259.75,682.5 254.75,680 253.5,672.5" fill="#0078e6" />
<polygon points="246,682.5 257.25,682.5 257.25,690 249.75,690 246,687.5" fill="#00b4e0" />
<polygon points="249.75,686.25 257.25,686.25 257.25,692.5 249.75,692.5" fill="#00e696" />
<polygon points="287.25,659.375 291,659.375 291,662.5 287.25,662.5" fill="#0078e6" />
<polygon points="291,661.25 293.5,661.25 293.5,665 291,665" fill="#0078e6" />
<polygon points="296,660 298.5,660 298.5,665 296,665" fill="#0078e6" />
<polygon points="297.25,665 299.75,665 299.75,667.5 297.25,667.5" fill="#0078e6" />
<polygon points="292.25,666.25 294.125,666.25 294.125,668.75 292.25,668.75" fill="#0078e6" />
<polygon points="296,671.25 297.875,671.25 297.875,673.125 296,673.125" fill="#0078e6" />
<polygon points="302.25,675 303.5,675 303.5,676.25 302.25,676.25" fill="#0078e6" />
<polygon points="303.5,672.5 308.5,672.5 308.5,676.25 303.5,676.25" fill="#0078e6" />
<polygon points="304.75,676.25 307.25,676.25 307.25,678.75 304.75,678.75" fill="#0078e6" />
<polygon points="292.25,650 296,650 296,657.5 292.25,657.5" fill="#00b4e0" />
<polygon points="299.75,627.5 308.5,623.75 319.75,619.375 327.25,618.125 328.5,621.25 341,616.875 341.625,622.5 336,627.5 328.5,628.75 319.75,627.5 308.5,628.75 299.75,630" fill="#00b4e0" />
<polygon points="301,626.875 308.5,624.375 319.75,620.625 326,619.375 326,623.75 319.75,625.625 308.5,627.5 301,628.75" fill="#00e696" />
<polygon points="313.5,621.875 319.75,621.875 319.75,625 313.5,625" fill="#00704a" />
<polygon points="322.25,620 326,620 326,623.125 322.25,623.125" fill="#00704a" />
<polygon points="302.25,625.625 306,625.625 306,627.5 302.25,627.5" fill="#00704a" />
<polygon points="333.5,623.75 341,623.75 341,627.5 333.5,628.125" fill="#00e696" />
<polygon points="303.5,632.5 308.5,632.5 308.5,637.5 303.5,637.5" fill="#00b4e0" />
<polygon points="319.75,628.75 326,628.75 326,632.5 319.75,632.5" fill="#00b4e0" />
<polygon points="231,612.5 234.75,612.5 234.75,617.5 231,617.5" fill="#00b4e0" />
<polygon points="238.5,621.875 241,621.875 241,626.25 238.5,626.25" fill="#00b4e0" />
<polygon points="240.375,614.375 242.875,614.375 242.875,616.875 240.375,616.875" fill="#00b4e0" />
<polygon points="245.375,615.625 248.5,615.625 248.5,617.5 245.375,617.5" fill="#00b4e0" />
<polygon points="241.625,633.125 245.375,633.125 245.375,635.625 241.625,635.625" fill="#00b4e0" />
<polygon points="219.125,623.75 223.5,623.75 223.5,627.5 219.125,627.5" fill="#00b4e0" />
<polygon points="226,618.125 232.25,618.125 232.25,623.75 226,623.75" fill="#00b4e0" />
<polygon points="219.75,632.5 223.5,632.5 223.5,638.75 219.75,638.75" fill="#00b4e0" />
<polygon points="227.875,618.125 231,618.125 231,621.25 227.875,621.25" fill="#00704a" />
<polygon points="216,597.5 223.5,595 228.5,597.5 232.25,602.5 229.75,610 223.5,612.5 221,620 216,621.25" fill="#00b4e0" />
<polygon points="216,600 222.25,598.75 227.25,602.5 226,608.75 219.75,611.25 216,611.25" fill="#00e696" />
<polygon points="242.875,590 253.5,590 253.5,595 242.875,595" fill="#00b4e0" />
<polygon points="244.75,590.625 252.25,590.625 252.25,593.75 244.75,593.75" fill="#00e696" />
<polygon points="267.25,590 272.25,590 272.25,595 267.25,595" fill="#00b4e0" />
<polygon points="259.75,593.75 261,593.75 261,595 259.75,595" fill="#0078e6" />
<polygon points="305.375,645 314.75,644.375 314.75,652.5 311,655 313.5,660 308.5,661.25 305.375,655" fill="#00e696" />
<polygon points="307.25,648.75 311,648.75 311,657.5 307.25,657.5" fill="#00704a" />
<polygon points="308.5,646.875 313.5,646.875 313.5,650 308.5,650" fill="#dc9531" />
<polygon points="305.375,646.25 308.5,646.25 308.5,650 305.375,650" fill="#c8c8c8" />
<polygon points="317.875,643.125 326.625,643.125 326.625,652.5 317.875,652.5" fill="#00e696" />
<polygon points="319.125,644.375 326,644.375 326,650.625 319.125,650.625" fill="#c8c8c8" />
<polygon points="322.25,645.625 326,645.625 326,648.75 322.25,648.75" fill="#00704a" />
<polygon points="316,658.125 326,657.5 326,665 322.25,672.5 316,673.75 314.75,667.5" fill="#00e696" />
<polygon points="316,658.125 319.125,658.125 319.125,662.5 316,662.5" fill="#dc9531" />
<polygon points="317.875,665 322.25,665 322.25,669.375 317.875,669.375" fill="#c8c8c8" />
<polygon points="318.5,660 323.5,660 323.5,665 318.5,665" fill="#00704a" />
<polygon points="314.75,670 319.75,670 319.75,675 314.75,675" fill="#00b4e0" />
<polygon points="327.875,635 334.125,635 334.125,643.125 327.875,643.125" fill="#00e696" />
<polygon points="329.125,636.25 333.5,636.25 333.5,641.875 329.125,641.875" fill="#c8c8c8" />
<polygon points="330.375,638.125 333.5,638.125 333.5,641.875 330.375,641.875" fill="#dc9531" />
<polygon points="326,645 336,645 336,655 326,655" fill="#00e696" />
<polygon points="327.875,646.875 332.875,646.875 332.875,652.5 327.875,652.5" fill="#c8c8c8" />
<polygon points="332.875,650 337.875,650 337.875,655 332.875,655" fill="#00b4e0" />
<polygon points="331,660 336,657.5 343.5,658.125 344.75,670 341,677.5 333.5,680 330.375,675" fill="#00e696" />
<polygon points="333.5,660 342.25,660 342.25,676.25 333.5,676.25" fill="#00704a" />
<polygon points="334.75,661.25 342.25,661.25 342.25,671.25 334.75,671.25" fill="#c8c8c8" />
<polygon points="334.125,668.125 339.75,668.125 339.75,673.125 334.125,673.125" fill="#dc9531" />
<polygon points="322.25,628.75 328.5,628.75 328.5,631.875 322.25,631.875" fill="#00b4e0" />
<polygon points="407.125,596.25 415.875,596.25 415.875,604.375 424,606.875 424,609.375 420.875,609.375 420.875,615 429,615 429,626.25 434.625,629.375 434.625,633.75 427.75,633.75 420.875,629.375 417.75,633.75 412.75,633.75 412.75,636.875 409,640 404,640 399,636.875 395.875,640 395.875,655.625 385.25,655.625 385.25,661.875 379,661.875 382.125,667.5 382.125,680 385.25,683.75 385.25,692 357.125,692 357.125,686.25 360.25,686.25 360.25,678.125 349,675 349,661.25 346.5,661.25 346.5,655 340.25,652.5 336.5,645 336.5,640 340.25,636.875 349,633.75 352.125,631.25 352.125,623.75 357.125,615.625 360.25,612.5 381.5,612.5 385.25,609.375 392.75,606.875 399,606.875 399,601.25 404,601.25" fill="#00e696" />
<polygon points="407.125,597.5 415.875,597.5 415.875,604.375 407.125,604.375" fill="#00704a" />
<polygon points="369,615.625 380.25,615.625 380.25,623.125 374,623.125 374,627.5 365.875,628.75 365.875,623.125 369,623.125" fill="#00704a" />
<polygon points="412.75,617.5 420.875,615 429,615 429,626.25 420.875,626.25 420.875,629.375 410.25,629.375 410.25,621.25" fill="#00704a" />
<polygon points="385.25,630 399,623.125 405.25,623.125 406.5,632.5 404,640 399,636.875 395.875,640 395.875,655.625 385.25,655.625" fill="#00704a" />
<polygon points="349,633.75 361.5,633.75 361.5,636.25 349,638.75" fill="#00704a" />
<polygon points="349,661.25 367.75,661.25 374,667.5 374,686.25 365.25,686.25 365.25,692 357.125,692 357.125,686.25 360.25,686.25 360.25,678.125 349,675" fill="#00704a" />
<polygon points="370.875,647.5 379,647.5 379,661.25 370.875,661.25" fill="#00704a" />
<polygon points="354,618.75 362.75,618.75 362.75,630 370.875,630 370.875,632.5 379,632.5 382.125,635 379,638.75 370.875,641.25 370.875,647.5 367.75,650 367.75,661.25 360.25,667.5 355.25,667.5 355.25,661.25 357.125,655 352.125,655 349,660 346.5,660 349,653.75 352.125,650 354,642.5 349,638.75 354,635" fill="#c8c8c8" />
<polygon points="380.875,615 385.25,609.375 395.875,609.375 399,606.875 406.5,606.875 406.5,604.375 412.75,604.375 412.75,609.375 409,609.375 407.125,617.5 399,620 395.875,623.125 392.75,620 390.25,626.25 384,628.125 377.75,628.75 377.75,623.125 380.875,621.25" fill="#c8c8c8" />
<polygon points="399,623.125 405.25,623.125 405.25,631.25 399,631.25" fill="#c8c8c8" />
<polygon points="415.875,642.5 420.875,642.5 420.875,651.25 410.25,651.25 410.25,648.125 413,645" fill="#c8c8c8" />
<polygon points="410.25,641.875 415.875,641.875 415.875,645 410.25,645" fill="#00704a" />
<polygon points="418.375,645 420.875,645 420.875,650 418.375,650" fill="#00704a" />
<polygon points="379,651.25 385.25,651.25 385.25,658.75 379,658.75" fill="#c8c8c8" />
<polygon points="396.5,607.5 406.5,607.5 406.5,617.5 396.5,617.5" fill="#dc9531" />
<polygon points="399,609.375 402.75,609.375 402.75,615 399,615" fill="#eeb522" />
<polygon points="380.25,617.5 383.375,615 392.75,615 392.75,620 389,625.625 380.25,625.625" fill="#dc9531" />
<polygon points="384.625,617.5 388.375,617.5 388.375,622.5 384.625,622.5" fill="#eeb522" />
<polygon points="363.375,640 369,640 369,645 363.375,645" fill="#dc9531" />
<polygon points="357.125,648.125 360.25,648.125 362.75,651.25 362.75,658.75 360.25,658.75 360.25,655 357.125,653.75" fill="#dc9531" />
<polygon points="360.25,623.125 362.75,623.125 362.75,626.25 360.25,626.25" fill="#dc9531" />
<polygon points="337.125,636.875 346.5,636.875 349,640 349,647.5 344,650.625 340.25,648.125 337.125,643.75" fill="#fcd912" />
<polygon points="339.625,636.875 349,636.875 349,640 339.625,640" fill="#eeb522" />
<polygon points="352.125,623.125 356.75,623.125 356.75,630.625 352.125,630.625" fill="#fcd912" />
<polygon points="365.875,618.75 369,618.75 369,625 365.875,625" fill="#000" />
<polygon points="382.125,642.5 387.75,642.5 387.75,648.125 382.125,648.125" fill="#000" />
<polygon points="377.75,648.125 380.25,648.125 380.25,650.625 377.75,650.625" fill="#000" />
<polygon points="412.75,612.5 417.75,612.5 417.75,617.5 412.75,617.5" fill="#000" />
<polygon points="370.875,623.125 374,623.125 374,626.25 370.875,626.25" fill="#00e696" />
<polygon points="361.5,626.25 363.375,626.25 363.375,628.75 361.5,628.75" fill="#00e696" />
<polygon points="372.75,645 379,645 379,648.125 372.75,648.125" fill="#00e696" />
<polygon points="389,642.5 391.5,642.5 391.5,645 389,645" fill="#00e696" />
<polygon points="392.75,636.875 395.875,636.875 395.875,640 392.75,640" fill="#00e696" />
<polygon points="411.5,620 417.75,620 417.75,623.125 411.5,623.125" fill="#00e696" />
<polygon points="427.125,626.25 431.5,626.25 431.5,629.375 427.125,629.375" fill="#00e696" />
<polygon points="327.125,616.875 336.5,616.875 341.5,616.25 341.5,631.25 335.25,632.5 327.125,631.25" fill="#00b4e0" />
<polygon points="334,624.375 340.875,624.375 340.875,628.125 334,628.125" fill="#00e696" />
<polygon points="329,636.25 333.375,636.25 333.375,642.5 329,642.5" fill="#c8c8c8" />
<polygon points="330.25,637.5 333.375,637.5 333.375,641.875 330.25,641.875" fill="#dc9531" />
<polygon points="334,650 337.75,650 337.75,653.75 334,653.75" fill="#00b4e0" />
<polygon points="326.5,643.125 329,643.125 329,646.875 326.5,646.875" fill="#00b4e0" />
<polygon points="327.75,648.125 330.875,648.125 330.875,653.125 327.75,653.125" fill="#c8c8c8" />
<polygon points="330.875,661.25 336.5,657.5 344,660 344,670 340.25,677.5 330.875,680 330.25,672.5" fill="#00e696" />
<polygon points="336.5,661.25 340.875,661.25 340.875,667.5 336.5,667.5" fill="#c8c8c8" />
<polygon points="334,668.125 340.25,668.125 340.25,673.125 334,673.125" fill="#dc9531" />
<polygon points="330.875,673.125 336.5,673.125 336.5,680 330.875,680" fill="#00b4e0" />
<polygon points="342.125,666.25 344,666.25 344,670 342.125,670" fill="#dc9531" />
<polygon points="156,640 214.75,640 211,647.5 208.5,653.75 197.25,656.25 197.25,669.375 194.75,669.375 194.75,666.25 183.5,666.25 183.5,663.125 169.75,663.125 166.625,658.75 163.5,647.5 156,646.25" fill="#00e696" />
<polygon points="169.75,640 211,640 208.5,652.5 194.75,653.75 192.25,662.5 186,663.125 169.75,658.75" fill="#00704a" />
<polygon points="174.75,647.5 183.5,647.5 183.5,642.5 193.5,642.5 193.5,650 192.25,658.75 189.125,661.875 186,661.875 183.5,658.75 181,653.75 174.75,652.5" fill="#c8c8c8" />
<polygon points="194.125,640 202.25,640 202.25,650.625 194.125,650.625" fill="#dc9531" />
<polygon points="200.375,642.5 207.875,642.5 207.875,651.25 200.375,651.25" fill="#c8c8c8" />
<polygon points="194.125,640 202.25,640 202.25,650.625 194.125,650.625" fill="#dc9531" />
<polygon points="202.875,653.75 223.5,653.75 223.5,660 202.875,660" fill="#00e696" />
<polygon points="214.75,654.375 223.5,654.375 223.5,657.5 214.75,657.5" fill="#00704a" />
<polygon points="219.75,651.25 226,651.25 226,653.75 219.75,653.75" fill="#00b4e0" />
<polygon points="221,657.5 231,657.5 231,663.125 221,663.125" fill="#00b4e0" />
<polygon points="223.5,665 231,665 231,668.75 223.5,668.75" fill="#00b4e0" />
<polygon points="231,665 237.25,665 237.25,671.25 231,671.25" fill="#00e696" />
<polygon points="200.375,675.625 209.75,670 231,668.75 236,671.25 231,677.5 226,682.5 221,687.5 209.75,692.5 208.5,688.125 202.875,685.625 200.375,682.5" fill="#00e696" />
<polygon points="208.5,673.125 231,670 226,677.5 218.5,685 211,686.25 206,687.5 206,681.25" fill="#00704a" />
<polygon points="212.25,673.75 219.75,673.75 219.75,681.875 212.25,681.875" fill="#c8c8c8" />
<polygon points="200.375,682.5 202.875,682.5 202.875,701.25 200.375,701.25" fill="#00e696" />
<polygon points="194.125,697.5 199.75,697.5 199.75,702.5 202.875,700 211,700 217.25,695 223.5,695 227.25,700 231,702.5 238.5,708.75 241,700 248.5,697.5 251,694.375 266,693.125 271,694.375 271,700 293.5,700 293.5,695 300,697.5 300,710 288.5,712.5 288.5,716.25 279.75,712.5 273.5,712.5 273.5,716.875 279.75,717.5 279.75,732.5 268.5,732.5 264.75,735.625 252.25,735.625 249.125,730 255.375,730 255.375,718.75 261,716.25 261,713.75 252.25,716.25 252.25,708.125 248.5,713.75 243.5,718.125 233.5,716.25 233.5,711.25 229.75,708.75 224.75,710.625 213.5,710.625 207.25,708.125 200.375,708.125 200.375,703.125 194.125,703.125" fill="#00e696" />
<polygon points="202.875,702.5 211,700 226.625,700 226.625,703.125 222.25,705 207.875,707.5 202.875,705" fill="#00704a" />
<polygon points="202.875,700 211,700 211,702.5 202.875,702.5" fill="#c8c8c8" />
<polygon points="261.625,719.375 276.625,719.375 276.625,727.5 269.75,727.5 269.75,725 266,725 266,729.375 261.625,729.375" fill="#00704a" />
<polygon points="243.5,697.5 248.5,697.5 248.5,702.5 243.5,702.5" fill="#00b4e0" />
<polygon points="255.375,702.5 261,702.5 261,708.125 255.375,708.125" fill="#00b4e0" />
<polygon points="293.5,695 296.625,695 296.625,700 293.5,700" fill="#00b4e0" />
<polygon points="266,700 269.125,700 269.125,702.5 266,702.5" fill="#00704a" />
<polygon points="166,721.875 169.125,721.875 169.125,725 174.75,725 174.75,730 169.125,730 166,727.5" fill="#00e696" />
<polygon points="252.25,652.5 263.5,652.5 263.5,665 262.25,672.5 263.5,681.25 257.25,686.875 256.625,692.5 249.75,692.5 249.75,686.875 245.375,686.25 245.375,681.25 252.25,680 252.25,672.5 246,671.25 246,665 252.25,663.75" fill="#00b4e0" />
<polygon points="253.5,655 262.25,655 262.25,663.75 253.5,663.75" fill="#00e696" />
<polygon points="254.75,658.75 258.5,658.75 258.5,663.125 254.75,663.125" fill="#00704a" />
<polygon points="251,686.875 256.625,686.875 256.625,692.5 251,692.5" fill="#00e696" />
<polygon points="253.5,673.75 262.25,673.75 262.25,680 253.5,680" fill="#0078e6" />
<polygon points="294.125,721.875 300,721.875 300,730 294.125,730" fill="#00e696" />
<polygon points="287.25,658.75 291,658.75 291,662.5 287.25,662.5" fill="#0078e6" />
<polygon points="292.25,663.75 294.75,663.75 294.75,668.75 292.25,668.75" fill="#0078e6" />
<polygon points="296,660 298.5,660 298.5,665 296,665" fill="#0078e6" />
<polygon points="297.25,665 300,665 300,667.5 297.25,667.5" fill="#0078e6" />
<polygon points="296,670 297.875,670 297.875,672.5 296,672.5" fill="#0078e6" />
<polygon points="348.75,662.5 380,662.5 382.5,667.5 382.5,683.75 385,683.75 385,688.75 380,692.5 380,700 371.25,700 371.25,696.25 366.25,696.25 366.25,700 360.625,700 357.5,696.25 357.5,686.25 360.625,683.75 360.625,677.5 355,673.75 348.75,673.75" fill="#00e696" />
<polygon points="348.75,662.5 357.5,662.5 357.5,671.25 348.75,671.25" fill="#00704a" />
<polygon points="366.25,665 377.5,665 372.5,677.5 370,685 365,695 360.625,695 360.625,686.25 366.25,682.5" fill="#00704a" />
<polygon points="290,700 293.75,695 301.25,692.5 302.5,686.25 305.625,682.5 311.25,680 312.5,686.25 315.625,686.25 315.625,689.375 308.75,690 308.75,700 305,705 298.75,708.125 298.75,712.5 293.75,716.25 290,716.25" fill="#00e696" />
<polygon points="293.125,695 296.25,695 296.25,698.75 293.125,698.75" fill="#00b4e0" />
<polygon points="301.25,690 305,690 305,693.75 301.25,693.75" fill="#00b4e0" />
<polygon points="297.5,703.125 303.75,703.125 303.75,705.625 297.5,705.625" fill="#00b4e0" />
<polygon points="308.75,680 311.25,680 311.25,683.125 308.75,683.125" fill="#00b4e0" />
<polygon points="312.5,686.25 315.625,686.25 315.625,689.375 312.5,689.375" fill="#00b4e0" />
<polygon points="294.375,721.875 301.875,721.875 301.875,730 294.375,730" fill="#00e696" />
<polygon points="410,641.875 420.625,641.875 420.625,650 417.5,652.5 410,652.5" fill="#00704a" />
<polygon points="413.125,645 417.5,641.875 420.625,641.875 417.5,647.5 417.5,652.5 410,652.5 410,647.5" fill="#c8c8c8" />
<rect x="342" y="565" width="4" height="5" fill="#00e696" />
<g fill="none" stroke="#fff" stroke-width="1" shape-rendering="crispEdges">
<ellipse cx="272.8" cy="630.5" rx="26.87" ry="27.35"/>
<ellipse cx="272.8" cy="630.5" rx="54.94" ry="54.70"/>
<ellipse cx="272.8" cy="630.5" rx="82.41" ry="82.05"/>
<ellipse cx="272.8" cy="630.5" rx="109.88" ry="109.40"/>
<ellipse cx="272.8" cy="630.5" rx="137.35" ry="136.75"/>
<ellipse cx="272.8" cy="630.5" rx="164.82" ry="164.10"/>
<ellipse cx="272.8" cy="630.5" rx="192.29" ry="191.45"/>
<ellipse cx="272.8" cy="630.5" rx="219.76" ry="218.80"/>
</g>
<line x1="55" y1="631.5" x2="245.4" y2="631.5" stroke="#fff" stroke-width="1" />
<line x1="300.2" y1="631.5" x2="488" y2="631.5" stroke="#fff" stroke-width="1" />
<line x1="273.5" y1="458" x2="273.5" y2="603.1" stroke="#fff" stroke-width="1" />
<line x1="273.5" y1="657.9" x2="273.5" y2="795" stroke="#fff" stroke-width="1" />
<g stroke="#fff" stroke-width="1" shape-rendering="crispEdges">
<line x1="292.17" y1="649.87" x2="427.80" y2="785.50"/>
<line x1="253.43" y1="649.87" x2="117.80" y2="785.50"/>
<line x1="253.43" y1="611.13" x2="117.80" y2="475.50"/>
<line x1="292.17" y1="611.13" x2="427.80" y2="475.50"/>
</g>
</g>
<circle cx="242" cy="464.5" r="6.5" fill="none" stroke="#ffa500" stroke-width="1" shape-rendering="geometricPrecision"/>
<circle cx="271.6" cy="616.4" r="7.4" fill="none" stroke="#ffa500" stroke-width="1" shape-rendering="geometricPrecision"/>
<text x="232" y="480" font-size="6" fill="#ffa500" font-family='"Liberation Sans", sans-serif' text-anchor="start" >whoi-moh</text>
<text x="259" y="631.5" font-size="6" fill="#ffa500" font-family='"Liberation Sans", sans-serif' text-anchor="start" font-weight="bold">rhb-125-0</text>
<line x1="266" y1="463.5" x2="277" y2="463.5" stroke="#f0e68c" stroke-width="1" />
<line x1="271.5" y1="458" x2="271.5" y2="469" stroke="#f0e68c" stroke-width="1" />
<text x="44" y="464" font-size="6" fill="#f0e68c" font-family='"Liberation Sans", sans-serif' text-anchor="start" >10</text>
<text x="271" y="809" font-size="6" fill="#f0e68c" font-family='"Liberation Sans", sans-serif' text-anchor="middle" >−125</text>
<rect x="255" y="477" width="6" height="6" fill="#00e696" />
<line x1="488" y1="458.5" x2="573" y2="458.5" stroke="#b0b0b0" stroke-width="1" />
<text x="489.5" y="470.7" font-size="18" fill="#fff" font-family='"Liberation Sans", sans-serif' text-anchor="start"  stroke="#fff" stroke-width="0.35">maxdz</text>
<rect x="490" y="485" width="10" height="8" fill="#fa8080" />
<rect x="490" y="493" width="10" height="8" fill="#ff9096" />
<rect x="490" y="501" width="10" height="8" fill="#fdb062" />
<rect x="490" y="509" width="10" height="8" fill="#fdd9b0" />
<rect x="490" y="517" width="10" height="8" fill="#fcd912" />
<rect x="490" y="525" width="10" height="8" fill="#eeb522" />
<rect x="490" y="533" width="10" height="8" fill="#dc9531" />
<rect x="490" y="541" width="10" height="8" fill="#c8c8c8" />
<rect x="490" y="549" width="10" height="8" fill="#00704a" />
<rect x="490" y="557" width="10" height="8" fill="#00e696" />
<rect x="490" y="565" width="10" height="8" fill="#00b4e0" />
<rect x="490" y="573" width="10" height="8" fill="#0078e6" />
<rect x="490" y="581" width="10" height="8" fill="#1e3cdc" />
<rect x="490" y="589" width="10" height="8" fill="#3c1ee6" />
<rect x="490" y="597" width="10" height="8" fill="#6414f0" />
<rect x="490" y="605" width="10" height="8" fill="#8c0af5" />
<text x="505" y="493" font-size="18" fill="#fff" font-family='"Liberation Sans", sans-serif' text-anchor="start"  stroke="#fff" stroke-width="0.35">65.0</text>
<text x="505" y="517.1" font-size="18" fill="#fff" font-family='"Liberation Sans", sans-serif' text-anchor="start"  stroke="#fff" stroke-width="0.35">50.0</text>
<text x="505" y="541.2" font-size="18" fill="#fff" font-family='"Liberation Sans", sans-serif' text-anchor="start"  stroke="#fff" stroke-width="0.35">35.0</text>
<text x="505" y="565.3" font-size="18" fill="#fff" font-family='"Liberation Sans", sans-serif' text-anchor="start"  stroke="#fff" stroke-width="0.35">20.0</text>
<text x="505" y="589.4" font-size="18" fill="#fff" font-family='"Liberation Sans", sans-serif' text-anchor="start"  stroke="#fff" stroke-width="0.35">5.0</text>
<text x="505" y="613.5" font-size="18" fill="#fff" font-family='"Liberation Sans", sans-serif' text-anchor="start"  stroke="#fff" stroke-width="0.35">−10.0</text>
<line x1="488" y1="639.5" x2="573" y2="639.5" stroke="#b0b0b0" stroke-width="1" />
<text x="489.5" y="651.7" font-size="18" fill="#fff" font-family='"Liberation Sans", sans-serif' text-anchor="start"  stroke="#fff" stroke-width="0.35">maxdz</text>
<rect x="490" y="666" width="10" height="8" fill="#fa8080" />
<rect x="490" y="674" width="10" height="8" fill="#ff9096" />
<rect x="490" y="682" width="10" height="8" fill="#fdb062" />
<rect x="490" y="690" width="10" height="8" fill="#fdd9b0" />
<rect x="490" y="698" width="10" height="8" fill="#fcd912" />
<rect x="490" y="706" width="10" height="8" fill="#eeb522" />
<rect x="490" y="714" width="10" height="8" fill="#dc9531" />
<rect x="490" y="722" width="10" height="8" fill="#c8c8c8" />
<rect x="490" y="730" width="10" height="8" fill="#00704a" />
<rect x="490" y="738" width="10" height="8" fill="#00e696" />
<rect x="490" y="746" width="10" height="8" fill="#00b4e0" />
<rect x="490" y="754" width="10" height="8" fill="#0078e6" />
<rect x="490" y="762" width="10" height="8" fill="#1e3cdc" />
<rect x="490" y="770" width="10" height="8" fill="#3c1ee6" />
<rect x="490" y="778" width="10" height="8" fill="#6414f0" />
<rect x="490" y="786" width="10" height="8" fill="#8c0af5" />
<text x="505" y="674" font-size="18" fill="#fff" font-family='"Liberation Sans", sans-serif' text-anchor="start"  stroke="#fff" stroke-width="0.35">65.0</text>
<text x="505" y="698.1" font-size="18" fill="#fff" font-family='"Liberation Sans", sans-serif' text-anchor="start"  stroke="#fff" stroke-width="0.35">50.0</text>
<text x="505" y="722.2" font-size="18" fill="#fff" font-family='"Liberation Sans", sans-serif' text-anchor="start"  stroke="#fff" stroke-width="0.35">35.0</text>
<text x="505" y="746.3" font-size="18" fill="#fff" font-family='"Liberation Sans", sans-serif' text-anchor="start"  stroke="#fff" stroke-width="0.35">20.0</text>
<text x="505" y="770.4" font-size="18" fill="#fff" font-family='"Liberation Sans", sans-serif' text-anchor="start"  stroke="#fff" stroke-width="0.35">5.0</text>
<text x="505" y="794.5" font-size="18" fill="#fff" font-family='"Liberation Sans", sans-serif' text-anchor="start"  stroke="#fff" stroke-width="0.35">−10.0</text>
<line x1="488" y1="820.5" x2="573" y2="820.5" stroke="#b0b0b0" stroke-width="1" />
<text x="381.3" y="860.2" font-size="24" fill="#fff" font-family='"Liberation Sans", sans-serif' text-anchor="start"  textLength="179.88" lengthAdjust="spacingAndGlyphs" stroke="#fff" stroke-width="0.35">Alt: 0.50 km MSL</text>
<g transform="translate(10,821)"><rect x="0" y="0" width="46" height="48" fill="#989898"/><rect x="1" y="1" width="44" height="46" fill="#191970"/><g fill="none" stroke="#ffff00" stroke-linecap="round" stroke-linejoin="round" shape-rendering="geometricPrecision"><path d="M7 12.6 C7.8 10.5 10.5 8.8 13 8.2 C15 7.6 18 7.4 22 8.5 C25 9.6 27.5 11.4 30.5 11.8 C33.5 12 36 10.8 37.8 9.2" stroke-width="2.3"/><path d="M37.8 9.2 C37.2 11.5 36.5 12.8 35 14 C31 17 26 19 22.5 21.5 C18.5 25 14 30 10.5 34 L6.2 39.6" stroke-width="2"/><path d="M6.2 39.6 C8 37.8 10.5 36.8 13 36.4 C15 36.1 18.5 36.4 22 37.8 C25 39.2 27.5 40.3 30 40.4 C33 40.5 35.5 39 36.8 37.6 C37.8 36.6 38.4 36 38.9 35.2" stroke-width="2.3"/></g></g>
<g transform="translate(57,821)"><rect x="0" y="0" width="46" height="48" fill="#989898"/><rect x="1" y="1" width="44" height="46" fill="#696969"/><text x="2.6" y="15" font-size="15.5" font-weight="bold" font-family='"Liberation Sans", sans-serif' fill="#e0e0e0" textLength="30.5" lengthAdjust="spacingAndGlyphs">GOES</text><clipPath id="ec57_821"><circle cx="2" cy="41" r="23.5"/></clipPath><g clip-path="url(#ec57_821)"><rect x="3" y="17" width="23" height="27" fill="url(#dith_e0e0e0)"/><polygon points="13,25 16,21 19,21 21,25 23,31 22,34 18,34 14,31" fill="#e0e0e0"/><polygon points="3,44 3,38 5,36 9,36 11,39 11.5,44" fill="#e0e0e0"/><polygon points="3,17 8,17 6,20 3,21" fill="#e0e0e0"/></g><polygon points="40.5,18.5 43.5,21.5 40.5,24.5 37.5,21.5" fill="#e0e0e0"/><line x1="22" y1="23.5" x2="38" y2="22.5" stroke="#e0e0e0" stroke-width="1" stroke-dasharray="1 1.6"/><line x1="24.5" y1="31.5" x2="38.5" y2="23.5" stroke="#e0e0e0" stroke-width="1" stroke-dasharray="1 1.6"/><rect x="19" y="17" width="1" height="1" fill="#e0e0e0"/><rect x="24" y="20" width="1" height="1" fill="#e0e0e0"/><rect x="31" y="20" width="1" height="1" fill="#e0e0e0"/><rect x="39" y="30" width="1" height="1" fill="#e0e0e0"/><rect x="35" y="32" width="1" height="1" fill="#e0e0e0"/><rect x="25" y="42" width="1" height="1" fill="#e0e0e0"/><text x="28.5" y="42.6" font-size="10.2" font-family='"Liberation Sans", sans-serif' fill="#e0e0e0" textLength="10.5" lengthAdjust="spacingAndGlyphs">IR</text></g>
<g transform="translate(104,821)"><rect x="0" y="0" width="46" height="48" fill="#989898"/><rect x="1" y="1" width="44" height="46" fill="#191970"/><path d="M4.8 9.2 C6 15 9.5 20 13.5 24 C18 28.5 23 30.6 27.4 30.8" fill="none" stroke="#ffff00" stroke-width="2.3" shape-rendering="geometricPrecision"/><polygon points="11.3,20.8 15.5,20.8 15,24.2" fill="none" stroke="#ffff00" stroke-width="1"/><polygon points="11.2,23.5 13.4,23.5 14.7,30 15,35.2 15.6,39.6 8.2,39.6 8.6,35.2 9.9,30" fill="#ffff00"/><text transform="translate(35.6,16.6) scale(0.72,1)" font-size="14.2" font-weight="normal" font-family='"Liberation Sans", sans-serif' fill="#ffff00" text-anchor="middle">S</text><text transform="translate(35.6,28) scale(0.72,1)" font-size="14.2" font-weight="normal" font-family='"Liberation Sans", sans-serif' fill="#ffff00" text-anchor="middle">U</text><text transform="translate(35.6,39.6) scale(0.72,1)" font-size="14.2" font-weight="normal" font-family='"Liberation Sans", sans-serif' fill="#ffff00" text-anchor="middle">R</text></g>
<g transform="translate(151,821)"><rect x="0" y="0" width="46" height="48" fill="#989898"/><rect x="1" y="1" width="44" height="46" fill="#191970"/><line x1="5.5" y1="5" x2="5.5" y2="43" stroke="#ffff00" stroke-width="1"/><line x1="14.5" y1="5" x2="14.5" y2="43" stroke="#ffff00" stroke-width="1"/><line x1="23.5" y1="5" x2="23.5" y2="43" stroke="#ffff00" stroke-width="1"/><line x1="32.5" y1="5" x2="32.5" y2="43" stroke="#ffff00" stroke-width="1"/><line x1="40.5" y1="5" x2="40.5" y2="43" stroke="#ffff00" stroke-width="1"/><line x1="5" y1="5.5" x2="41" y2="5.5" stroke="#ffff00" stroke-width="1"/><line x1="5" y1="14.5" x2="41" y2="14.5" stroke="#ffff00" stroke-width="1"/><line x1="5" y1="23.5" x2="41" y2="23.5" stroke="#ffff00" stroke-width="1"/><line x1="5" y1="32.5" x2="41" y2="32.5" stroke="#ffff00" stroke-width="1"/><line x1="5" y1="42.5" x2="41" y2="42.5" stroke="#ffff00" stroke-width="1"/><path d="M12.2 9.4 C13 15 16 20 20 23.5 C24 27.5 29 30.6 34.4 31.4" fill="none" stroke="#ffff00" stroke-width="1.8" shape-rendering="geometricPrecision"/><polygon points="18.3,22.7 20.4,22.7 21.8,30.4 22.8,40 16,40 17,30.4" fill="#ffff00"/></g>
<g transform="translate(198,821)"><rect x="0" y="0" width="14" height="48" fill="#989898"/><rect x="1" y="1" width="12" height="46" fill="#191970"/><text transform="translate(7,11) scale(1,1)" font-size="6.6" font-weight="normal" font-family='"Liberation Sans", sans-serif' fill="#ffff00" text-anchor="middle">B</text><text transform="translate(7,17.2) scale(1,1)" font-size="6.6" font-weight="normal" font-family='"Liberation Sans", sans-serif' fill="#ffff00" text-anchor="middle">O</text><text transform="translate(7,23.4) scale(1,1)" font-size="6.6" font-weight="normal" font-family='"Liberation Sans", sans-serif' fill="#ffff00" text-anchor="middle">U</text><text transform="translate(7,29.6) scale(1,1)" font-size="6.6" font-weight="normal" font-family='"Liberation Sans", sans-serif' fill="#ffff00" text-anchor="middle">N</text><text transform="translate(7,35.8) scale(1,1)" font-size="6.6" font-weight="normal" font-family='"Liberation Sans", sans-serif' fill="#ffff00" text-anchor="middle">D</text><text transform="translate(7,42) scale(1,1)" font-size="6.6" font-weight="normal" font-family='"Liberation Sans", sans-serif' fill="#ffff00" text-anchor="middle">S</text></g>
<g transform="translate(213,845)"><rect x="0" y="0" width="22" height="24" fill="#989898"/><rect x="1" y="1" width="20" height="22" fill="#191970"/><line x1="3.5" y1="4" x2="3.5" y2="20" stroke="#ffff00" stroke-width="1"/><line x1="8.5" y1="4" x2="8.5" y2="20" stroke="#ffff00" stroke-width="1"/><line x1="13.5" y1="4" x2="13.5" y2="20" stroke="#ffff00" stroke-width="1"/><line x1="18.5" y1="4" x2="18.5" y2="20" stroke="#ffff00" stroke-width="1"/><line x1="3" y1="4.5" x2="19" y2="4.5" stroke="#ffff00" stroke-width="1"/><line x1="3" y1="9.5" x2="19" y2="9.5" stroke="#ffff00" stroke-width="1"/><line x1="3" y1="14.5" x2="19" y2="14.5" stroke="#ffff00" stroke-width="1"/><line x1="3" y1="19.5" x2="19" y2="19.5" stroke="#ffff00" stroke-width="1"/></g>
<g transform="translate(236,821)"><rect x="0" y="0" width="21" height="48" fill="#989898"/><rect x="1" y="1" width="19" height="46" fill="#191970"/><polygon points="3,5 7,4 6,7 4.5,10 6,13 8,16 5,15 3,13" fill="#ffff00"/><polygon points="9,5 13,4 11,7" fill="#ffff00"/><polygon points="14,4 18,3.5 15,7 16,10 17.5,13 15,16 13.5,13 12,9" fill="#ffff00"/><text transform="translate(10.5,25.5) scale(0.95,1)" font-size="9.6" font-weight="normal" font-family='"Liberation Sans", sans-serif' fill="#ffff00" text-anchor="middle">M</text><text transform="translate(10.5,33.8) scale(0.95,1)" font-size="9.6" font-weight="normal" font-family='"Liberation Sans", sans-serif' fill="#ffff00" text-anchor="middle">A</text><text transform="translate(10.5,42) scale(0.95,1)" font-size="9.6" font-weight="normal" font-family='"Liberation Sans", sans-serif' fill="#ffff00" text-anchor="middle">P</text></g>
<g transform="translate(258,821)"><rect x="0" y="0" width="21" height="48" fill="#989898"/><rect x="1" y="1" width="19" height="46" fill="#191970"/><g fill="none" stroke="#ffff00" stroke-width="1" shape-rendering="geometricPrecision"><ellipse cx="10.5" cy="23.5" rx="7.3" ry="8.8"/><ellipse cx="10.5" cy="23.5" rx="5.2" ry="6.4"/><ellipse cx="10.5" cy="23.5" rx="2.3" ry="2.7"/><line x1="12.80" y1="23.50" x2="17.80" y2="23.50"/><line x1="12.13" y1="25.41" x2="15.66" y2="29.72"/><line x1="10.50" y1="26.20" x2="10.50" y2="32.30"/><line x1="8.87" y1="25.41" x2="5.34" y2="29.72"/><line x1="8.20" y1="23.50" x2="3.20" y2="23.50"/><line x1="8.87" y1="21.59" x2="5.34" y2="17.28"/><line x1="10.50" y1="20.80" x2="10.50" y2="14.70"/><line x1="12.13" y1="21.59" x2="15.66" y2="17.28"/></g></g>
<g transform="translate(280,845)"><rect x="0" y="0" width="22" height="24" fill="#989898"/><rect x="1" y="1" width="20" height="22" fill="#191970"/><circle cx="11" cy="12" r="7" fill="none" stroke="#ffff00" stroke-width="1" shape-rendering="geometricPrecision"/></g>
<g transform="translate(303,821)"><rect x="0" y="0" width="46" height="48" fill="#989898"/><rect x="1" y="1" width="44" height="46" fill="#696969"/><g fill="none" stroke="#e0e0e0" stroke-width="1"><polyline points="6.5,32.5 39,32.5 36.5,37.5 8,37.5 6.5,34.5 6.5,32.5"/><polyline points="8.5,32 8.5,24.5 12,24.5 14.2,32"/><circle cx="22" cy="23.5" r="3" shape-rendering="geometricPrecision"/><line x1="21.5" y1="26.5" x2="21.5" y2="32"/><line x1="23.5" y1="26.5" x2="23.5" y2="32"/><line x1="34.5" y1="16" x2="34.5" y2="32"/></g><path d="M3 44 V40 L5 38.5 L7 40.5 L9 39 L11 40.5 L13.5 39 L16 40.5 L18.5 39 L21 40.5 L23.5 39 L26 40.5 L28.5 39 L31 40.5 L33.5 39 L36 40.5 L38.5 39 L41 40 L43 38 V44 Z" fill="#e0e0e0"/></g>
<line x1="4.5" y1="427" x2="4.5" y2="871" stroke="#fff" stroke-width="1" stroke-dasharray="1 1"/>
<line x1="573.5" y1="427" x2="573.5" y2="871" stroke="#fff" stroke-width="1" stroke-dasharray="1 1"/>
<line x1="5" y1="871.5" x2="574" y2="871.5" stroke="#fff" stroke-width="1" stroke-dasharray="1 1"/>
<rect x="1080" y="770" width="46" height="104" fill="#5f9ea0" />
<line x1="1126.5" y1="771" x2="1126.5" y2="874" stroke="#fff" stroke-width="1" stroke-dasharray="1 1"/>
<line x1="1080" y1="873.5" x2="1127" y2="873.5" stroke="#fff" stroke-width="1" stroke-dasharray="1 1"/>
<rect x="1080" y="770" width="41.5" height="99" fill="#000" />
<rect x="1080" y="776" width="39.5" height="91" fill="#e6e6e6" />
<rect x="5" y="872" width="587" height="25.5" fill="#fff8dc" />
<rect x="5" y="872" width="13" height="25.5" fill="#000" />
<rect x="5" y="872" width="13" height="25.5" fill="url(#dith_ffffff)" />
<rect x="18" y="872" width="2" height="25.5" fill="#000" />
<clipPath id="tclip"><rect x="20" y="872" width="572" height="26"/></clipPath>
<text x="22" y="877.7" font-size="15" font-family='"Liberation Mono", monospace' fill="#000" clip-path="url(#tclip)">rain:beaufait:100&gt;xdump.all 970811.1405.xwd</text>
<rect x="22.5" y="881.5" width="8" height="13" fill="none" stroke="#228b22" stroke-width="1"/>
<line x1="5" y1="871.5" x2="574" y2="871.5" stroke="#fff" stroke-width="1" stroke-dasharray="1 1"/>
<line x1="0" y1="897.5" x2="592" y2="897.5" stroke="#000" stroke-width="1" stroke-dasharray="1 1"/>
<rect x="574" y="771" width="506" height="105" fill="#000" />
<rect x="428" y="872" width="652" height="4.5" fill="#000" />
<rect x="576" y="777" width="44" height="22" fill="none" stroke="#fff" stroke-width="2"/>
<text x="580.7" y="792.8" font-size="12" fill="#fff" font-family='"Liberation Sans", sans-serif' text-anchor="start"  textLength="33.50" lengthAdjust="spacingAndGlyphs">Dismiss</text>
<rect x="574" y="801" width="500" height="2" fill="#fff" />
<rect x="574" y="869" width="500" height="2" fill="#fff" />
<rect x="1072" y="801" width="2" height="70" fill="#fff" />
<text x="574" y="817.6" font-size="15" fill="#fff" font-family='"Liberation Mono", monospace' text-anchor="start" stroke="#fff" stroke-width="0.55">PLATFORM   FIELD      ALTITUDE       TIME</text>
<text x="574" y="832.65" font-size="15" fill="#fff" font-family='"Liberation Mono", monospace' text-anchor="start" stroke="#fff" stroke-width="0.55">rhb_lowprf maxdz      0.50 km MSL    11-Aug-97,14:00:30</text>
<text x="574" y="847.7" font-size="15" fill="#fff" font-family='"Liberation Mono", monospace' text-anchor="start" stroke="#fff" stroke-width="0.55">rhb_3d     maxdz      0.50 km MSL    11-Aug-97,14:01:22</text>
<line x1="573.5" y1="771" x2="573.5" y2="876" stroke="#fff" stroke-width="1" stroke-dasharray="1 1"/>
<line x1="1080.5" y1="776" x2="1080.5" y2="876" stroke="#fff" stroke-width="1" stroke-dasharray="1 1"/>
<line x1="428" y1="876.5" x2="1081" y2="876.5" stroke="#fff" stroke-width="1" stroke-dasharray="1 1"/>
<line x1="1045" y1="775.5" x2="1121" y2="775.5" stroke="#fff" stroke-width="1" stroke-dasharray="1 1"/>
<line x1="574" y1="770.5" x2="1135" y2="770.5" stroke="#fff" stroke-width="1" stroke-dasharray="1 1"/>
<rect x="592" y="877" width="5" height="23" fill="#5f9ea0" />
<rect x="597" y="877" width="2" height="23" fill="#000" />
<rect x="599" y="877" width="493" height="23" fill="#e6e6e6" />
<rect x="1092" y="874" width="2" height="26" fill="#000" />
<rect x="1094" y="874" width="5" height="26" fill="#5f9ea0" />
<rect x="1080" y="874" width="12" height="3" fill="#e6e6e6" />
<rect x="604" y="877" width="2" height="23" fill="#000" />
<rect x="740" y="877" width="2" height="23" fill="#000" />
<rect x="746" y="877" width="2" height="23" fill="#000" />
<rect x="933" y="877" width="2" height="23" fill="#000" />
<rect x="939" y="877" width="2" height="23" fill="#000" />
<rect x="1037" y="877" width="2" height="23" fill="#000" />
<rect x="611" y="877" width="62" height="22" fill="#ff0000" />
<rect x="612" y="877" width="60" height="21" fill="#e6e6e6" />
<text x="616" y="894" font-size="15.5" fill="#000" font-family='"Liberation Sans", sans-serif' text-anchor="start" textLength="50.5" lengthAdjust="spacingAndGlyphs">Real Time</text>
<rect x="677" y="877" width="58" height="22" fill="#ff0000" />
<rect x="678" y="877" width="56" height="21" fill="#000" />
<text x="682" y="894" font-size="15.5" fill="#fff" font-family='"Liberation Sans", sans-serif' text-anchor="start" textLength="46.5" lengthAdjust="spacingAndGlyphs">Set Time</text>
<text x="753.5" y="890" font-size="14.5" fill="#000" font-family='"Liberation Sans", sans-serif' text-anchor="start" font-weight="bold" textLength="24" lengthAdjust="spacingAndGlyphs">Skip</text>
<rect x="784" y="877" width="39" height="20" fill="#ffff00" />
<rect x="786" y="877" width="35" height="18" fill="#e6e6e6" />
<text x="791.5" y="889" font-size="11" fill="#000" font-family='"Liberation Sans", sans-serif' text-anchor="start" >1</text>
<polyline points="792.5,893 795,890.8 797.5,893" fill="none" stroke="#000" stroke-width="1.3"/>
<rect x="825" y="877" width="52" height="20.5" fill="#000" />
<rect x="826" y="877" width="50" height="19.5" fill="#e6e6e6" />
<rect x="831.5" y="881.5" width="8" height="10" fill="none" stroke="#000" stroke-width="1"/>
<line x1="833" y1="884.5" x2="838" y2="884.5" stroke="#000" stroke-width="1" />
<line x1="833" y1="886.5" x2="838" y2="886.5" stroke="#000" stroke-width="1" />
<line x1="833" y1="888.5" x2="838" y2="888.5" stroke="#000" stroke-width="1" />
<line x1="833" y1="892.5" x2="841" y2="892.5" stroke="#000" stroke-width="1" />
<line x1="840.5" y1="883" x2="840.5" y2="892.5" stroke="#000" stroke-width="1" />
<text x="846" y="890.5" font-size="15" fill="#000" font-family='"Liberation Serif", serif' text-anchor="start" font-weight="bold" textLength="26" lengthAdjust="spacingAndGlyphs">hrs</text>
<rect x="879" y="877" width="24.5" height="21" fill="#ff0000" />
<rect x="880" y="877" width="23.5" height="20" fill="#e6e6e6" />
<rect x="903.5" y="877" width="25.5" height="21" fill="#ff0000" />
<rect x="903.5" y="877" width="24.5" height="20" fill="#000" />
<rect x="882" y="877" width="17" height="17" fill="#000" />
<rect x="882" y="877" width="17" height="17" fill="url(#dith_ffffff)" />
<rect x="885" y="879" width="11" height="12" fill="#e6e6e6" />
<path d="M886.5 885.5 l4 -3.5 v2.5 h4.5 v2 h-4.5 v2.5 z" fill="#000"/>
<rect x="908.5" y="877" width="17" height="17" fill="#000" />
<rect x="908.5" y="877" width="17" height="17" fill="url(#dith_ffffff)" />
<rect x="911.5" y="879" width="11" height="12" fill="#e6e6e6" />
<path d="M921.0 885.5 l-4 -3.5 v2.5 h-4.5 v2 h4.5 v2.5 z" fill="#000"/>
<rect x="945" y="877" width="33" height="22" fill="#ff0000" />
<rect x="946" y="877" width="31" height="21" fill="#e6e6e6" />
<text x="949.5" y="894" font-size="15.5" fill="#000" font-family='"Liberation Sans", sans-serif' text-anchor="start" textLength="22.5" lengthAdjust="spacingAndGlyphs">Help</text>
<rect x="982" y="877" width="50" height="22" fill="#ff0000" />
<rect x="983" y="877" width="48" height="21" fill="#e6e6e6" />
<text x="986.5" y="894" font-size="15.5" fill="#000" font-family='"Liberation Sans", sans-serif' text-anchor="start" textLength="41" lengthAdjust="spacingAndGlyphs">Dismiss</text>
</svg>
</body></html>
